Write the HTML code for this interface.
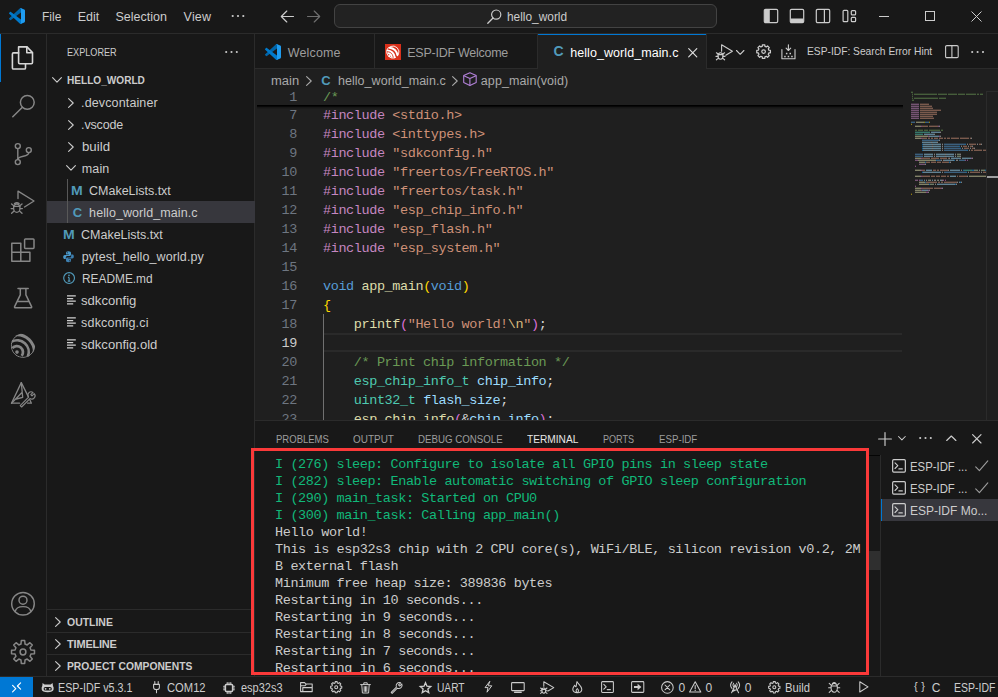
<!DOCTYPE html>
<html lang="en">
<head>
<meta charset="utf-8">
<title>hello_world - Visual Studio Code</title>
<style>
*{box-sizing:border-box;margin:0;padding:0}
html,body{width:998px;height:697px;overflow:hidden;background:#181818}
body{position:relative;font-family:"Liberation Sans",sans-serif;font-size:13px;color:#cccccc;-webkit-font-smoothing:antialiased}
.abs{position:absolute}
.t{position:absolute;white-space:pre;line-height:1}
svg{position:absolute;overflow:visible}
.ic{fill:none;stroke:#cccccc;stroke-width:1;stroke-linecap:round;stroke-linejoin:round}
.mono{font-family:"Liberation Mono",monospace}
/* ---------- title bar ---------- */
#title{left:0;top:0;width:998px;height:34px;background:#181818;border-bottom:1px solid #2b2b2b}
#title .t{font-size:13px;top:10px;color:#cccccc}
#search{left:334px;top:4px;width:383px;height:24px;background:#222222;border:1px solid #434343;border-radius:6px}
/* ---------- activity bar ---------- */
#act{left:0;top:34px;width:47px;height:642px;background:#181818;border-right:1px solid #2b2b2b}
/* ---------- side bar ---------- */
#side{left:47px;top:34px;width:208px;height:642px;background:#181818;border-right:1px solid #2b2b2b}
#side .t{font-size:13px}
/* ---------- editor ---------- */
#tabs{left:255px;top:34px;width:743px;height:35px;background:#181818;border-bottom:1px solid #2b2b2b}
#editor{left:255px;top:69px;width:743px;height:351px;background:#1f1f1f;overflow:hidden}
/* ---------- panel ---------- */
#panel{left:255px;top:420px;width:743px;height:256px;background:#181818;border-top:1px solid #2b2b2b;overflow:hidden}
/* ---------- status ---------- */
#status{left:0;top:676px;width:998px;height:21px;background:#181818;border-top:1px solid #2b2b2b}
#status .t{font-size:12px;top:4px}
</style>
</head>
<body>
<div id="title" class="abs">
<svg style="left:9px;top:8px;" width="16" height="16" viewBox="0 0 100 100"><path fill="#0065A9" d="M96.4614 10.7962L75.8569 0.875542C73.4719 -0.272773 70.6217 0.211611 68.75 2.08333L1.29858 63.5832C-0.515693 65.2373 -0.513607 68.0937 1.30308 69.7452L6.81272 74.754C8.29793 76.1042 10.5347 76.2036 12.1338 74.9905L93.3609 13.3699C96.086 11.3026 100 13.2462 100 16.6667V16.4275C100 14.0265 98.6246 11.8378 96.4614 10.7962Z"/><path fill="#007ACC" d="M96.4614 89.2038L75.8569 99.1245C73.4719 100.273 70.6217 99.7884 68.75 97.9167L1.29858 36.4169C-0.515693 34.7627 -0.513607 31.9063 1.30308 30.2548L6.81272 25.246C8.29793 23.8958 10.5347 23.7964 12.1338 25.0095L93.3609 86.6301C96.086 88.6974 100 86.7538 100 83.3334V83.5726C100 85.9735 98.6246 88.1622 96.4614 89.2038Z"/><path fill="#1F9CF0" d="M75.8578 99.1263C73.4721 100.274 70.6219 99.7885 68.75 97.9166C71.0564 100.223 75 98.5895 75 95.3278V4.67213C75 1.41039 71.0564 -0.223106 68.75 2.08329C70.6219 0.211402 73.4721 -0.273666 75.8578 0.873633L96.4587 10.7807C98.6234 11.8217 100 14.0112 100 16.4132V83.5871C100 85.9891 98.6234 88.1786 96.4586 89.2196L75.8578 99.1263Z"/></svg>
<span class="t" style="left:42.10px;top:10.67px;font-size:12.5px;transform:scaleX(0.9582);transform-origin:0 0;">File</span>
<span class="t" style="left:77.70px;top:10.67px;font-size:12.5px;letter-spacing:-0.013px;">Edit</span>
<span class="t" style="left:115.50px;top:10.67px;font-size:12.5px;letter-spacing:0.010px;">Selection</span>
<span class="t" style="left:183.60px;top:10.67px;font-size:12.5px;letter-spacing:0.177px;">View</span>
<svg style="left:231px;top:14px;" width="14" height="4" viewBox="0 0 14 4"><circle cx="1.7" cy="2" r="1.1" fill="#ccc"/><circle cx="7" cy="2" r="1.1" fill="#ccc"/><circle cx="12.3" cy="2" r="1.1" fill="#ccc"/></svg>
<svg style="left:280px;top:10px;" width="14" height="13" viewBox="0 0 14 13"><path class="ic" d="M13.5 6.5 H1.5 M6.8 1 L1.3 6.5 L6.8 12" style="stroke:#cccccc;stroke-width:1.15"/></svg>
<svg style="left:307px;top:10px;" width="14" height="13" viewBox="0 0 14 13"><path class="ic" d="M0.5 6.5 H12.5 M7.2 1 L12.7 6.5 L7.2 12" style="stroke:#6f6f6f;stroke-width:1.15"/></svg>
<div id="search" class="abs"></div>
<svg style="left:487px;top:9px;" width="15" height="15" viewBox="0 0 15 15"><circle class="ic" cx="9.2" cy="5.6" r="4.6" style="stroke-width:1.2"/><path class="ic" d="M6 9 L0.8 14.2" style="stroke-width:1.3"/></svg>
<span class="t" style="left:506.60px;top:11.07px;font-size:12.5px;transform:scaleX(0.9504);transform-origin:0 0;">hello_world</span>
<svg style="left:763px;top:8px;" width="16" height="16" viewBox="0 0 16 16"><rect x="1.3" y="1.4" width="13.4" height="13.2" rx="1.3" fill="none" stroke="#cccccc" stroke-width="1.2"/><path d="M1.6 2.4 Q1.6 1.7 2.4 1.7 H6.8 V14.3 H2.4 Q1.6 14.3 1.6 13.6 Z" fill="#cccccc"/></svg>
<svg style="left:789px;top:8px;" width="16" height="16" viewBox="0 0 16 16"><rect x="1.3" y="1.4" width="13.4" height="13.2" rx="1.3" fill="none" stroke="#cccccc" stroke-width="1.2"/><path d="M1.6 10.4 H14.4 V13.6 Q14.4 14.3 13.6 14.3 H2.4 Q1.6 14.3 1.6 13.6 Z" fill="#cccccc"/></svg>
<svg style="left:815px;top:8px;" width="16" height="16" viewBox="0 0 16 16"><rect x="1.3" y="1.4" width="13.4" height="13.2" rx="1.3" fill="none" stroke="#cccccc" stroke-width="1.2"/><path d="M9.4 1.4 V14.6" fill="none" stroke="#cccccc" stroke-width="1.2"/></svg>
<svg style="left:842px;top:8px;" width="16" height="16" viewBox="0 0 16 16"><rect x="1.1" y="2.4" width="4.7" height="11.2" rx="0.9" fill="none" stroke="#cccccc" stroke-width="1.2"/><rect x="9.3" y="2.6" width="4.3" height="4.3" rx="0.9" fill="none" stroke="#cccccc" stroke-width="1.2"/><rect x="9.3" y="9.4" width="4.3" height="4.3" rx="0.9" fill="none" stroke="#cccccc" stroke-width="1.2"/></svg>
<div class="abs" style="left:879px;top:16px;width:10px;height:1px;background:#cccccc;"></div>
<div class="abs" style="left:925px;top:11px;width:10px;height:10px;border:1px solid #cccccc"></div>
<svg style="left:971px;top:11px;" width="11" height="11" viewBox="0 0 11 11"><path d="M0.5 0.5 L10.5 10.5 M10.5 0.5 L0.5 10.5" stroke="#cccccc" stroke-width="1" fill="none"/></svg>
</div>
<div id="act" class="abs"></div>
<div class="abs" style="left:0px;top:34px;width:1px;height:48px;background:#0078d4;"></div>
<svg style="left:0px;top:0px;" width="48" height="700" viewBox="0 0 48 700"><g fill="none" stroke="#d7d7d7" stroke-width="1.6" stroke-linejoin="round" stroke-linecap="round"><path d="M18.6 46.9 H27 L32.5 52.6 V62.6 Q32.5 63.7 31.4 63.7 H19.7 Q18.6 63.7 18.6 62.6 Z"/><path d="M26.8 47.1 V52.8 H32.3"/><path d="M18.6 52.9 H13.5 Q12.4 52.9 12.4 54 V67.9 Q12.4 69 13.5 69 H24.4 Q25.5 69 25.5 67.9 V64"/></g></svg>
<svg style="left:0px;top:0px;" width="48" height="700" viewBox="0 0 48 700"><g fill="none" stroke="#868686" stroke-width="1.5" stroke-linejoin="round" stroke-linecap="round"><circle cx="27.3" cy="102.3" r="6.9"/><path d="M22.4 107.3 L12.8 116.8"/></g></svg>
<svg style="left:0px;top:0px;" width="48" height="700" viewBox="0 0 48 700"><g fill="none" stroke="#868686" stroke-width="1.4" stroke-linejoin="round" stroke-linecap="round"><circle cx="17.8" cy="146.1" r="2.5"/><circle cx="17.8" cy="162.1" r="2.5"/><circle cx="28.8" cy="150.1" r="2.5"/><path d="M17.8 148.8 V159.4"/><path d="M28.8 152.8 C28.8 157.5 18.2 155 17.9 159.4"/></g></svg>
<svg style="left:0px;top:0px;" width="48" height="700" viewBox="0 0 48 700"><g fill="none" stroke="#868686" stroke-width="1.35" stroke-linejoin="round" stroke-linecap="round"><path d="M18 198.5 V191.2 L34 201 L24.5 207"/><ellipse cx="16.8" cy="208.2" rx="3.2" ry="4.2"/><path d="M13.6 206.4 H20 M11.2 208.6 H13.4 M20.2 208.6 H22.4 M11.6 204 L13.8 205.8 M22 204 L19.8 205.8 M11.6 213.2 L13.8 211.2 M22 213.2 L19.8 211.2 M14.5 203.6 Q16.8 201.8 19.1 203.6"/></g></svg>
<svg style="left:0px;top:0px;" width="48" height="700" viewBox="0 0 48 700"><g fill="none" stroke="#868686" stroke-width="1.5" stroke-linejoin="round" stroke-linecap="round"><path d="M11.8 243.3 H20.8 V252.2 H29.9 V261.2 H11.8 Z M11.8 252.2 H20.8 V261.2"/><rect x="24.6" y="239" width="9.4" height="9.4" rx="0.8"/></g></svg>
<svg style="left:0px;top:0px;" width="48" height="700" viewBox="0 0 48 700"><g fill="none" stroke="#868686" stroke-width="1.5" stroke-linejoin="round" stroke-linecap="round"><path d="M18 288.4 H28.2 M20.3 288.6 V294.8 L14.6 306.6 Q14.2 307.8 15.6 307.8 H30.6 Q32 307.8 31.6 306.6 L25.9 294.8 V288.6 M17.2 301.6 H29"/></g></svg>
<svg style="left:0px;top:0px;" width="48" height="700" viewBox="0 0 48 700"><defs><clipPath id="espclip"><circle cx="22.9" cy="345.8" r="12.2"/></clipPath></defs><g fill="none" stroke="#868686" clip-path="url(#espclip)" stroke-linecap="butt"><path d="M17.5 335.4 A11.7 11.7 0 1 0 33.6 350.6" stroke-width="1"/><path d="M12.33 348.08 A6.1 6.1 0 0 1 21.67 355.92" stroke-width="2.7"/><path d="M11.51 341.67 A11.7 11.7 0 0 1 27.85 356.38" stroke-width="2.7"/><path d="M14.89 334.83 A17.3 17.3 0 0 1 34.21 353.81" stroke-width="2.9"/></g><circle cx="17" cy="352.1" r="1.8" fill="#868686"/></svg>
<svg style="left:0px;top:0px;" width="48" height="700" viewBox="0 0 48 700"><g fill="none" stroke="#868686" stroke-width="1.3" stroke-linejoin="round" stroke-linecap="round"><path d="M21.3 382.6 L11.5 403.2 H19.6 M21.3 382.6 L28.2 396.4 M27.6 403.2 H31.4 L29.8 399.8"/><path d="M21.3 382.6 L22.7 397.4 L16.4 399 M11.5 403.2 L22.2 392.2"/><path d="M20.2 405.6 L28.6 397.2 A3.3 3.3 0 0 1 33 392.4 L30.8 394.6 L32 395.8 L34.2 393.6 A3.3 3.3 0 0 1 30 398.6 L21.6 407 Z" stroke-width="1.15"/></g></svg>
<svg style="left:0px;top:0px;" width="48" height="700" viewBox="0 0 48 700"><g fill="none" stroke="#868686" stroke-width="1.45" stroke-linejoin="round" stroke-linecap="round"><circle cx="23" cy="603.7" r="11.3"/><circle cx="23" cy="600.2" r="4"/><path d="M15.2 611.6 Q16 606.6 23 606.6 Q30 606.6 30.8 611.6"/></g></svg>
<svg style="left:0px;top:0px;" width="48" height="700" viewBox="0 0 48 700"><g fill="none" stroke="#868686" stroke-width="1.5" stroke-linejoin="round" stroke-linecap="round"><path d="M20.96 644.06 L21.32 640.52 L24.68 640.52 L25.04 644.06 L27.17 644.94 L29.93 642.70 L32.30 645.07 L30.06 647.83 L30.94 649.96 L34.48 650.32 L34.48 653.68 L30.94 654.04 L30.06 656.17 L32.30 658.93 L29.93 661.30 L27.17 659.06 L25.04 659.94 L24.68 663.48 L21.32 663.48 L20.96 659.94 L18.83 659.06 L16.07 661.30 L13.70 658.93 L15.94 656.17 L15.06 654.04 L11.52 653.68 L11.52 650.32 L15.06 649.96 L15.94 647.83 L13.70 645.07 L16.07 642.70 L18.83 644.94 Z"/><circle cx="23" cy="652" r="2.9"/></g></svg>
<div id="side" class="abs"></div>
<span class="t" id="explorer" style="left:67.20px;top:47.24px;font-size:11px;transform:scaleX(0.8296);transform-origin:0 0;">EXPLORER</span>
<svg style="left:224.8px;top:50px;" width="14" height="4" viewBox="0 0 14 4"><circle cx="1.2" cy="2" r="1.05" fill="#cccccc"/><circle cx="6.5" cy="2" r="1.05" fill="#cccccc"/><circle cx="11.799999999999999" cy="2" r="1.05" fill="#cccccc"/></svg>
<svg style="left:52.2px;top:77.3px;" width="10" height="6" viewBox="0 0 10 6"><path d="M0.6 0.6 L5 5.2 L9.4 0.6" fill="none" stroke="#cccccc" stroke-width="1.1" stroke-linecap="round" stroke-linejoin="round"/></svg>
<span class="t" style="left:67.20px;top:75.04px;font-size:11px;transform:scaleX(0.9171);transform-origin:0 0;font-weight:700;">HELLO_WORLD</span>
<div class="abs" style="left:47px;top:201px;width:208px;height:22px;background:#37373d;"></div>
<div class="abs" style="left:67px;top:179px;width:1px;height:44px;background:#585858;"></div>
<span class="t" style="left:81.10px;top:96.67px;font-size:12.5px;letter-spacing:0.129px;">.devcontainer</span>
<svg style="left:67.6px;top:97.8px;" width="6" height="10" viewBox="0 0 6 10"><path d="M0.6 0.6 L5.2 5 L0.6 9.4" fill="none" stroke="#cccccc" stroke-width="1.1" stroke-linecap="round" stroke-linejoin="round"/></svg>
<span class="t" style="left:81.10px;top:118.67px;font-size:12.5px;letter-spacing:-0.163px;">.vscode</span>
<svg style="left:67.6px;top:119.8px;" width="6" height="10" viewBox="0 0 6 10"><path d="M0.6 0.6 L5.2 5 L0.6 9.4" fill="none" stroke="#cccccc" stroke-width="1.1" stroke-linecap="round" stroke-linejoin="round"/></svg>
<span class="t" style="left:81.70px;top:140.67px;font-size:12.5px;transform:scaleX(1.0602);transform-origin:0 0;">build</span>
<svg style="left:67.6px;top:141.79999999999998px;" width="6" height="10" viewBox="0 0 6 10"><path d="M0.6 0.6 L5.2 5 L0.6 9.4" fill="none" stroke="#cccccc" stroke-width="1.1" stroke-linecap="round" stroke-linejoin="round"/></svg>
<span class="t" style="left:81.70px;top:162.67px;font-size:12.5px;letter-spacing:0.168px;">main</span>
<svg style="left:65.5px;top:165.0px;" width="10" height="6" viewBox="0 0 10 6"><path d="M0.6 0.6 L5 5.2 L9.4 0.6" fill="none" stroke="#cccccc" stroke-width="1.1" stroke-linecap="round" stroke-linejoin="round"/></svg>
<span class="t" style="left:89.10px;top:184.67px;font-size:12.5px;letter-spacing:-0.020px;">CMakeLists.txt</span>
<span class="t" style="left:70.80px;top:184.44px;font-size:13px;transform:scaleX(1.1081);transform-origin:0 0;color:#519aba;font-weight:700;transform:scaleX(1.08);transform-origin:0 0;">M</span>
<span class="t" style="left:89.10px;top:206.67px;font-size:12.5px;letter-spacing:0.082px;">hello_world_main.c</span>
<span class="t" style="left:72.70px;top:206.44px;font-size:13px;color:#519aba;font-weight:700;">C</span>
<span class="t" style="left:81.10px;top:228.67px;font-size:12.5px;letter-spacing:-0.020px;">CMakeLists.txt</span>
<span class="t" style="left:63.20px;top:228.44px;font-size:13px;transform:scaleX(1.1081);transform-origin:0 0;color:#519aba;font-weight:700;transform:scaleX(1.08);transform-origin:0 0;">M</span>
<span class="t" style="left:81.70px;top:250.67px;font-size:12.5px;letter-spacing:0.094px;">pytest_hello_world.py</span>
<svg style="left:63.4px;top:250.50000000000003px;" width="11" height="11.5" viewBox="0 0 11 11.5"><path d="M5.4 0.3 C3.4 0.3 3 1 3 2 V3.4 H5.8 V4 H1.8 C0.6 4 0.2 5 0.2 6 C0.2 7.4 0.8 8 1.8 8 H2.8 V6.6 C2.8 5.6 3.6 5 4.4 5 H6.8 C7.6 5 8 4.4 8 3.6 V2 C8 1 7.4 0.3 5.4 0.3 Z" fill="#4a98c9"/><path d="M5.6 11.2 C7.6 11.2 8 10.5 8 9.5 V8.1 H5.2 V7.5 H9.2 C10.4 7.5 10.8 6.5 10.8 5.5 C10.8 4.1 10.2 3.5 9.2 3.5 H8.2 V4.9 C8.2 5.9 7.4 6.5 6.6 6.5 H4.2 C3.4 6.5 3 7.1 3 7.9 V9.5 C3 10.5 3.6 11.2 5.6 11.2 Z" fill="#3d7fb0"/><circle cx="4.3" cy="1.8" r="0.55" fill="#181818"/><circle cx="6.7" cy="9.7" r="0.55" fill="#181818"/></svg>
<span class="t" style="left:81.70px;top:272.67px;font-size:12.5px;transform:scaleX(0.9500);transform-origin:0 0;">README.md</span>
<svg style="left:62.8px;top:272.40000000000003px;" width="12.2" height="12.2" viewBox="0 0 12.2 12.2"><circle cx="6.1" cy="6.1" r="5.4" fill="none" stroke="#519aba" stroke-width="1.15"/><path d="M6.1 5.4 V9 M4.9 5.4 H6.1 M4.8 9.1 H7.4" stroke="#519aba" stroke-width="1.2" fill="none"/><circle cx="6" cy="3.3" r="0.85" fill="#519aba"/></svg>
<span class="t" style="left:81.10px;top:294.67px;font-size:12.5px;transform:scaleX(1.0491);transform-origin:0 0;">sdkconfig</span>
<svg style="left:66.6px;top:294.8px;" width="9" height="10" viewBox="0 0 9 10"><path d="M0 0.8 H8.8 M0 3.5 H6.2 M0 6.2 H8.8 M0 8.9 H6.2" stroke="#d0d0d0" stroke-width="1.25" fill="none"/></svg>
<span class="t" style="left:81.10px;top:316.67px;font-size:12.5px;letter-spacing:0.190px;">sdkconfig.ci</span>
<svg style="left:66.6px;top:316.8px;" width="9" height="10" viewBox="0 0 9 10"><path d="M0 0.8 H8.8 M0 3.5 H6.2 M0 6.2 H8.8 M0 8.9 H6.2" stroke="#d0d0d0" stroke-width="1.25" fill="none"/></svg>
<span class="t" style="left:81.10px;top:338.67px;font-size:12.5px;transform:scaleX(1.0471);transform-origin:0 0;">sdkconfig.old</span>
<svg style="left:66.6px;top:338.8px;" width="9" height="10" viewBox="0 0 9 10"><path d="M0 0.8 H8.8 M0 3.5 H6.2 M0 6.2 H8.8 M0 8.9 H6.2" stroke="#d0d0d0" stroke-width="1.25" fill="none"/></svg>
<div class="abs" style="left:47px;top:609px;width:207px;height:1px;background:#2b2b2b;"></div>
<div class="abs" style="left:47px;top:632px;width:207px;height:1px;background:#2b2b2b;"></div>
<div class="abs" style="left:47px;top:654px;width:207px;height:1px;background:#2b2b2b;"></div>
<span class="t" style="left:67.10px;top:617.24px;font-size:11px;transform:scaleX(0.9508);transform-origin:0 0;font-weight:700;">OUTLINE</span>
<svg style="left:54.8px;top:617.3px;" width="6" height="10" viewBox="0 0 6 10"><path d="M0.6 0.6 L5.2 5 L0.6 9.4" fill="none" stroke="#cccccc" stroke-width="1.1" stroke-linecap="round" stroke-linejoin="round"/></svg>
<span class="t" style="left:67.10px;top:639.34px;font-size:11px;letter-spacing:-0.219px;font-weight:700;">TIMELINE</span>
<svg style="left:54.8px;top:639.4px;" width="6" height="10" viewBox="0 0 6 10"><path d="M0.6 0.6 L5.2 5 L0.6 9.4" fill="none" stroke="#cccccc" stroke-width="1.1" stroke-linecap="round" stroke-linejoin="round"/></svg>
<span class="t" style="left:67.10px;top:661.34px;font-size:11px;transform:scaleX(0.9361);transform-origin:0 0;font-weight:700;">PROJECT COMPONENTS</span>
<svg style="left:54.8px;top:661.4px;" width="6" height="10" viewBox="0 0 6 10"><path d="M0.6 0.6 L5.2 5 L0.6 9.4" fill="none" stroke="#cccccc" stroke-width="1.1" stroke-linecap="round" stroke-linejoin="round"/></svg>
<div id="tabs" class="abs"></div>
<div class="abs" style="left:374px;top:34px;width:1px;height:34px;background:#2b2b2b;"></div>
<div class="abs" style="left:537px;top:34px;width:1px;height:34px;background:#2b2b2b;"></div>
<div class="abs" style="left:538px;top:34px;width:168px;height:35px;background:#1f1f1f;"></div>
<div class="abs" style="left:538px;top:34px;width:168px;height:1px;background:#0078d4;"></div>
<div class="abs" style="left:706px;top:34px;width:1px;height:35px;background:#2b2b2b;"></div>
<svg style="left:265px;top:44px;" width="16" height="16" viewBox="0 0 100 100"><path fill="#0065A9" d="M96.4614 10.7962L75.8569 0.875542C73.4719 -0.272773 70.6217 0.211611 68.75 2.08333L1.29858 63.5832C-0.515693 65.2373 -0.513607 68.0937 1.30308 69.7452L6.81272 74.754C8.29793 76.1042 10.5347 76.2036 12.1338 74.9905L93.3609 13.3699C96.086 11.3026 100 13.2462 100 16.6667V16.4275C100 14.0265 98.6246 11.8378 96.4614 10.7962Z"/><path fill="#007ACC" d="M96.4614 89.2038L75.8569 99.1245C73.4719 100.273 70.6217 99.7884 68.75 97.9167L1.29858 36.4169C-0.515693 34.7627 -0.513607 31.9063 1.30308 30.2548L6.81272 25.246C8.29793 23.8958 10.5347 23.7964 12.1338 25.0095L93.3609 86.6301C96.086 88.6974 100 86.7538 100 83.3334V83.5726C100 85.9735 98.6246 88.1622 96.4614 89.2038Z"/><path fill="#1F9CF0" d="M75.8578 99.1263C73.4721 100.274 70.6219 99.7885 68.75 97.9166C71.0564 100.223 75 98.5895 75 95.3278V4.67213C75 1.41039 71.0564 -0.223106 68.75 2.08329C70.6219 0.211402 73.4721 -0.273666 75.8578 0.873633L96.4587 10.7807C98.6234 11.8217 100 14.0112 100 16.4132V83.5871C100 85.9891 98.6234 88.1786 96.4586 89.2196L75.8578 99.1263Z"/></svg>
<span class="t" style="left:287.80px;top:47.07px;font-size:12.5px;letter-spacing:0.138px;color:#9d9d9d;">Welcome</span>
<svg style="left:385px;top:44px;" width="16" height="16" viewBox="0 0 16 16"><rect x="0" y="0" width="16" height="16" fill="#d9301b"/><g fill="none" stroke="#ffffff" stroke-linecap="round"><path d="M3.4 3.6 A6.2 6.2 0 0 0 10.6 13.4" stroke-width="0.9"/><path d="M5.6 2.4 A6.2 6.2 0 0 1 13.6 10.4" stroke-width="0.9"/><path d="M2.6 6.4 A7.4 7.4 0 0 1 9.6 13.2" stroke-width="1.9"/><path d="M3.2 9.2 A4.4 4.4 0 0 1 6.8 12.8" stroke-width="1.8"/><path d="M4.6 3.8 A9 9 0 0 1 12.4 11.2" stroke-width="1.9"/></g><circle cx="4.3" cy="12.1" r="1.1" fill="#fff"/></svg>
<span class="t" style="left:407.30px;top:47.07px;font-size:12.5px;letter-spacing:-0.261px;color:#9d9d9d;">ESP-IDF Welcome</span>
<span class="t" style="left:553.40px;top:44.30px;font-size:14px;color:#519aba;font-weight:700;">C</span>
<span class="t" style="left:570.20px;top:47.07px;font-size:12.5px;letter-spacing:0.070px;color:#ffffff;">hello_world_main.c</span>
<svg style="left:688px;top:48px;" width="10" height="10" viewBox="0 0 10 10"><path d="M0.7 0.7 L8.8 8.8 M8.8 0.7 L0.7 8.8" stroke="#e0e0e0" stroke-width="1.15" fill="none" stroke-linecap="round"/></svg>
<svg style="left:715px;top:44px;" width="19" height="17" viewBox="0 0 19 17"><g fill="none" stroke="#cccccc" stroke-width="1.1" stroke-linejoin="round" stroke-linecap="round"><path d="M6.6 7.2 V0.7 L17.4 7.2 L10.8 11.2"/><ellipse cx="5.5" cy="12" rx="2.5" ry="3.3"/><path d="M3 10.6 H8 M1 12.4 H3 M8 12.4 H10 M1.4 8.8 L3.2 10 M9.6 8.8 L7.8 10 M1.4 15.8 L3.2 14.4 M9.6 15.8 L7.8 14.4"/></g></svg>
<svg style="left:735.8px;top:49.6px;" width="9" height="5.4" viewBox="0 0 9 5.4"><path d="M0.5 0.5 L4.2 4.3 L7.9 0.5" fill="none" stroke="#cccccc" stroke-width="1.1" stroke-linecap="round" stroke-linejoin="round"/></svg>
<svg style="left:756px;top:44.4px;" width="15.2" height="15.2" viewBox="0 0 16 16"><path d="M6.58 2.48 L6.72 0.81 L9.28 0.81 L9.42 2.48 L10.90 3.09 L12.18 2.01 L13.99 3.82 L12.91 5.10 L13.52 6.58 L15.19 6.72 L15.19 9.28 L13.52 9.42 L12.91 10.90 L13.99 12.18 L12.18 13.99 L10.90 12.91 L9.42 13.52 L9.28 15.19 L6.72 15.19 L6.58 13.52 L5.10 12.91 L3.82 13.99 L2.01 12.18 L3.09 10.90 L2.48 9.42 L0.81 9.28 L0.81 6.72 L2.48 6.58 L3.09 5.10 L2.01 3.82 L3.82 2.01 L5.10 3.09 Z" fill="none" stroke="#cccccc" stroke-width="1.3" stroke-linejoin="round"/><circle cx="8" cy="8" r="1.9" fill="none" stroke="#cccccc" stroke-width="1.3"/></svg>
<svg style="left:781px;top:43.5px;" width="15" height="16" viewBox="0 0 15 16"><g fill="none" stroke="#cccccc" stroke-width="1.1" stroke-linecap="round" stroke-linejoin="round"><path d="M7.4 0.7 V6.4 M5.1 4.2 L7.4 6.5 L9.7 4.2"/><path d="M0.9 5.6 V14.8 H14 V5.6"/></g><g fill="#cccccc"><rect x="4.9" y="8.8" width="1.5" height="1.5"/><rect x="8.5" y="8.8" width="1.5" height="1.5"/><rect x="3.2" y="11.8" width="1.5" height="1.5"/><rect x="6.7" y="11.8" width="1.5" height="1.5"/><rect x="10.2" y="11.8" width="1.5" height="1.5"/></g></svg>
<span class="t" style="left:807.40px;top:45.91px;font-size:11.5px;transform:scaleX(0.8905);transform-origin:0 0;">ESP-IDF: Search Error Hint</span>
<svg style="left:944.6px;top:45px;" width="14" height="13.4" viewBox="0 0 14 13.4"><rect x="0.6" y="0.6" width="12.6" height="12" rx="1.2" fill="none" stroke="#cccccc" stroke-width="1.1"/><path d="M6.9 0.6 V12.6" stroke="#cccccc" stroke-width="1.1"/></svg>
<svg style="left:970.6px;top:50.2px;" width="14" height="4" viewBox="0 0 14 4"><circle cx="1.2" cy="2" r="1.05" fill="#cccccc"/><circle cx="6.6000000000000005" cy="2" r="1.05" fill="#cccccc"/><circle cx="12.0" cy="2" r="1.05" fill="#cccccc"/></svg>
<div id="editor" class="abs"></div>
<span class="t" style="left:271.00px;top:74.67px;font-size:12.5px;transform:scaleX(1.0371);transform-origin:0 0;color:#a9a9a9;">main</span>
<svg style="left:305.6px;top:76.2px;" width="6" height="10" viewBox="0 0 6 10"><path d="M0.6 0.6 L5.2 5 L0.6 9.4" fill="none" stroke="#a9a9a9" stroke-width="1.1" stroke-linecap="round" stroke-linejoin="round"/></svg>
<span class="t" style="left:321.20px;top:74.04px;font-size:13px;color:#519aba;font-weight:700;">C</span>
<span class="t" style="left:338.00px;top:74.67px;font-size:12.5px;letter-spacing:0.041px;color:#a9a9a9;">hello_world_main.c</span>
<svg style="left:452px;top:76.2px;" width="6" height="10" viewBox="0 0 6 10"><path d="M0.6 0.6 L5.2 5 L0.6 9.4" fill="none" stroke="#a9a9a9" stroke-width="1.1" stroke-linecap="round" stroke-linejoin="round"/></svg>
<svg style="left:463px;top:72.4px;" width="14" height="14.4" viewBox="0 0 14 14.4"><g fill="none" stroke="#b180d7" stroke-width="1.1" stroke-linejoin="round"><path d="M6.9 0.7 L13.2 3.6 V10.6 L6.9 13.6 L0.7 10.6 V3.6 Z"/><path d="M0.9 3.7 L6.9 6.6 L13 3.7 M6.9 6.6 V13.4"/></g></svg>
<span class="t" style="left:480.80px;top:74.67px;font-size:12.5px;letter-spacing:0.095px;color:#a9a9a9;">app_main(void)</span>
<div class="abs" style="left:255px;top:91px;width:743px;height:329px;overflow:hidden"><div class="abs" style="left:-255px;top:-91px;width:998px;height:697px">
<div class="abs" style="left:324px;top:333px;width:578px;height:2px;background:#2a2a2a;"></div>
<div class="abs" style="left:324px;top:350px;width:578px;height:2px;background:#2a2a2a;"></div>
<span class="t mono" style="left:289.20px;top:108.66px;font-size:13.5px;letter-spacing:-0.402px;color:#6e7681">7</span><span class="t mono" style="left:323px;top:108.66px;font-size:13.5px;letter-spacing:-0.402px"><span style="color:#c586c0">#include</span><span style="color:#d4d4d4"> </span><span style="color:#ce9178">&lt;stdio.h&gt;</span></span>
<span class="t mono" style="left:289.20px;top:127.66px;font-size:13.5px;letter-spacing:-0.402px;color:#6e7681">8</span><span class="t mono" style="left:323px;top:127.66px;font-size:13.5px;letter-spacing:-0.402px"><span style="color:#c586c0">#include</span><span style="color:#d4d4d4"> </span><span style="color:#ce9178">&lt;inttypes.h&gt;</span></span>
<span class="t mono" style="left:289.20px;top:146.66px;font-size:13.5px;letter-spacing:-0.402px;color:#6e7681">9</span><span class="t mono" style="left:323px;top:146.66px;font-size:13.5px;letter-spacing:-0.402px"><span style="color:#c586c0">#include</span><span style="color:#d4d4d4"> </span><span style="color:#ce9178">&quot;sdkconfig.h&quot;</span></span>
<span class="t mono" style="left:281.50px;top:165.66px;font-size:13.5px;letter-spacing:-0.402px;color:#6e7681">10</span><span class="t mono" style="left:323px;top:165.66px;font-size:13.5px;letter-spacing:-0.402px"><span style="color:#c586c0">#include</span><span style="color:#d4d4d4"> </span><span style="color:#ce9178">&quot;freertos/FreeRTOS.h&quot;</span></span>
<span class="t mono" style="left:281.50px;top:184.66px;font-size:13.5px;letter-spacing:-0.402px;color:#6e7681">11</span><span class="t mono" style="left:323px;top:184.66px;font-size:13.5px;letter-spacing:-0.402px"><span style="color:#c586c0">#include</span><span style="color:#d4d4d4"> </span><span style="color:#ce9178">&quot;freertos/task.h&quot;</span></span>
<span class="t mono" style="left:281.50px;top:203.66px;font-size:13.5px;letter-spacing:-0.402px;color:#6e7681">12</span><span class="t mono" style="left:323px;top:203.66px;font-size:13.5px;letter-spacing:-0.402px"><span style="color:#c586c0">#include</span><span style="color:#d4d4d4"> </span><span style="color:#ce9178">&quot;esp_chip_info.h&quot;</span></span>
<span class="t mono" style="left:281.50px;top:222.66px;font-size:13.5px;letter-spacing:-0.402px;color:#6e7681">13</span><span class="t mono" style="left:323px;top:222.66px;font-size:13.5px;letter-spacing:-0.402px"><span style="color:#c586c0">#include</span><span style="color:#d4d4d4"> </span><span style="color:#ce9178">&quot;esp_flash.h&quot;</span></span>
<span class="t mono" style="left:281.50px;top:241.66px;font-size:13.5px;letter-spacing:-0.402px;color:#6e7681">14</span><span class="t mono" style="left:323px;top:241.66px;font-size:13.5px;letter-spacing:-0.402px"><span style="color:#c586c0">#include</span><span style="color:#d4d4d4"> </span><span style="color:#ce9178">&quot;esp_system.h&quot;</span></span>
<span class="t mono" style="left:281.50px;top:260.66px;font-size:13.5px;letter-spacing:-0.402px;color:#6e7681">15</span>
<span class="t mono" style="left:281.50px;top:279.66px;font-size:13.5px;letter-spacing:-0.402px;color:#6e7681">16</span><span class="t mono" style="left:323px;top:279.66px;font-size:13.5px;letter-spacing:-0.402px"><span style="color:#569cd6">void</span><span style="color:#d4d4d4"> </span><span style="color:#dcdcaa">app_main</span><span style="color:#ffd700">(</span><span style="color:#569cd6">void</span><span style="color:#ffd700">)</span></span>
<span class="t mono" style="left:281.50px;top:298.66px;font-size:13.5px;letter-spacing:-0.402px;color:#6e7681">17</span><span class="t mono" style="left:323px;top:298.66px;font-size:13.5px;letter-spacing:-0.402px"><span style="color:#ffd700">{</span></span>
<span class="t mono" style="left:281.50px;top:317.66px;font-size:13.5px;letter-spacing:-0.402px;color:#6e7681">18</span><span class="t mono" style="left:323px;top:317.66px;font-size:13.5px;letter-spacing:-0.402px"><span style="color:#d4d4d4">    </span><span style="color:#dcdcaa">printf</span><span style="color:#da70d6">(</span><span style="color:#ce9178">&quot;Hello world!</span><span style="color:#d7ba7d">\n</span><span style="color:#ce9178">&quot;</span><span style="color:#da70d6">)</span><span style="color:#d4d4d4">;</span></span>
<span class="t mono" style="left:281.50px;top:336.66px;font-size:13.5px;letter-spacing:-0.402px;color:#cccccc">19</span>
<span class="t mono" style="left:281.50px;top:355.66px;font-size:13.5px;letter-spacing:-0.402px;color:#6e7681">20</span><span class="t mono" style="left:323px;top:355.66px;font-size:13.5px;letter-spacing:-0.402px"><span style="color:#d4d4d4">    </span><span style="color:#6a9955">/* Print chip information */</span></span>
<span class="t mono" style="left:281.50px;top:374.66px;font-size:13.5px;letter-spacing:-0.402px;color:#6e7681">21</span><span class="t mono" style="left:323px;top:374.66px;font-size:13.5px;letter-spacing:-0.402px"><span style="color:#d4d4d4">    </span><span style="color:#4ec9b0">esp_chip_info_t</span><span style="color:#d4d4d4"> </span><span style="color:#9cdcfe">chip_info</span><span style="color:#d4d4d4">;</span></span>
<span class="t mono" style="left:281.50px;top:393.66px;font-size:13.5px;letter-spacing:-0.402px;color:#6e7681">22</span><span class="t mono" style="left:323px;top:393.66px;font-size:13.5px;letter-spacing:-0.402px"><span style="color:#d4d4d4">    </span><span style="color:#4ec9b0">uint32_t</span><span style="color:#d4d4d4"> </span><span style="color:#9cdcfe">flash_size</span><span style="color:#d4d4d4">;</span></span>
<span class="t mono" style="left:281.50px;top:412.66px;font-size:13.5px;letter-spacing:-0.402px;color:#6e7681">23</span><span class="t mono" style="left:323px;top:412.66px;font-size:13.5px;letter-spacing:-0.402px"><span style="color:#d4d4d4">    </span><span style="color:#dcdcaa">esp_chip_info</span><span style="color:#da70d6">(</span><span style="color:#d4d4d4">&amp;</span><span style="color:#9cdcfe">chip_info</span><span style="color:#da70d6">)</span><span style="color:#d4d4d4">;</span></span>
<div class="abs" style="left:323px;top:314px;width:1px;height:106px;background:#707070;"></div>
<div class="abs" style="left:255px;top:91px;width:648px;height:14px;background:#1f1f1f;"></div>
<span class="t mono" style="left:289.20px;top:90.66px;font-size:13.5px;letter-spacing:-0.402px;color:#6e7681">1</span><span class="t mono" style="left:323px;top:90.66px;font-size:13.5px;letter-spacing:-0.402px"><span style="color:#6a9955">/*</span></span>
<div class="abs" style="left:257px;top:105px;width:646px;height:1px;background:#000000;"></div>
<div class="abs" style="left:257px;top:106px;width:646px;height:1px;background:rgba(0,0,0,.72);"></div>
<div class="abs" style="left:257px;top:107px;width:646px;height:1px;background:rgba(0,0,0,.28);"></div>
<div class="abs" style="left:257px;top:108px;width:646px;height:1px;background:rgba(0,0,0,.1);"></div>
</div></div>
<svg style="left:0px;top:0px;" width="998" height="200" viewBox="0 0 998 200"><g opacity="0.52"><rect x="911" y="92" width="2" height="1" fill="#6a9955"/><rect x="912" y="94" width="1" height="1" fill="#6a9955"/><rect x="914" y="94" width="23" height="1" fill="#6a9955"/><rect x="938" y="94" width="9" height="1" fill="#6a9955"/><rect x="948" y="94" width="9" height="1" fill="#6a9955"/><rect x="958" y="94" width="7" height="1" fill="#6a9955"/><rect x="966" y="94" width="10" height="1" fill="#6a9955"/><rect x="977" y="94" width="2" height="1" fill="#6a9955"/><rect x="980" y="94" width="3" height="1" fill="#6a9955"/><rect x="912" y="96" width="1" height="1" fill="#6a9955"/><rect x="912" y="98" width="1" height="1" fill="#6a9955"/><rect x="914" y="98" width="24" height="1" fill="#6a9955"/><rect x="939" y="98" width="7" height="1" fill="#6a9955"/><rect x="912" y="100" width="2" height="1" fill="#6a9955"/><rect x="911" y="104" width="8" height="1" fill="#c586c0"/><rect x="920" y="104" width="9" height="1" fill="#ce9178"/><rect x="911" y="106" width="8" height="1" fill="#c586c0"/><rect x="920" y="106" width="12" height="1" fill="#ce9178"/><rect x="911" y="108" width="8" height="1" fill="#c586c0"/><rect x="920" y="108" width="13" height="1" fill="#ce9178"/><rect x="911" y="110" width="8" height="1" fill="#c586c0"/><rect x="920" y="110" width="21" height="1" fill="#ce9178"/><rect x="911" y="112" width="8" height="1" fill="#c586c0"/><rect x="920" y="112" width="17" height="1" fill="#ce9178"/><rect x="911" y="114" width="8" height="1" fill="#c586c0"/><rect x="920" y="114" width="17" height="1" fill="#ce9178"/><rect x="911" y="116" width="8" height="1" fill="#c586c0"/><rect x="920" y="116" width="13" height="1" fill="#ce9178"/><rect x="911" y="118" width="8" height="1" fill="#c586c0"/><rect x="920" y="118" width="14" height="1" fill="#ce9178"/><rect x="911" y="122" width="4" height="1" fill="#569cd6"/><rect x="916" y="122" width="8" height="1" fill="#dcdcaa"/><rect x="924" y="122" width="1" height="1" fill="#ffd700"/><rect x="925" y="122" width="4" height="1" fill="#569cd6"/><rect x="929" y="122" width="1" height="1" fill="#ffd700"/><rect x="911" y="124" width="1" height="1" fill="#ffd700"/><rect x="915" y="126" width="6" height="1" fill="#dcdcaa"/><rect x="921" y="126" width="1" height="1" fill="#da70d6"/><rect x="922" y="126" width="6" height="1" fill="#ce9178"/><rect x="929" y="126" width="9" height="1" fill="#ce9178"/><rect x="938" y="126" width="1" height="1" fill="#da70d6"/><rect x="939" y="126" width="1" height="1" fill="#d4d4d4"/><rect x="915" y="130" width="2" height="1" fill="#6a9955"/><rect x="918" y="130" width="5" height="1" fill="#6a9955"/><rect x="924" y="130" width="4" height="1" fill="#6a9955"/><rect x="929" y="130" width="11" height="1" fill="#6a9955"/><rect x="941" y="130" width="2" height="1" fill="#6a9955"/><rect x="915" y="132" width="15" height="1" fill="#4ec9b0"/><rect x="931" y="132" width="9" height="1" fill="#9cdcfe"/><rect x="940" y="132" width="1" height="1" fill="#d4d4d4"/><rect x="915" y="134" width="8" height="1" fill="#4ec9b0"/><rect x="924" y="134" width="10" height="1" fill="#9cdcfe"/><rect x="934" y="134" width="1" height="1" fill="#d4d4d4"/><rect x="915" y="136" width="13" height="1" fill="#dcdcaa"/><rect x="928" y="136" width="1" height="1" fill="#da70d6"/><rect x="929" y="136" width="1" height="1" fill="#d4d4d4"/><rect x="930" y="136" width="9" height="1" fill="#9cdcfe"/><rect x="939" y="136" width="1" height="1" fill="#da70d6"/><rect x="940" y="136" width="1" height="1" fill="#d4d4d4"/><rect x="915" y="138" width="6" height="1" fill="#dcdcaa"/><rect x="921" y="138" width="1" height="1" fill="#da70d6"/><rect x="922" y="138" width="5" height="1" fill="#ce9178"/><rect x="928" y="138" width="2" height="1" fill="#ce9178"/><rect x="931" y="138" width="2" height="1" fill="#ce9178"/><rect x="934" y="138" width="4" height="1" fill="#ce9178"/><rect x="939" y="138" width="4" height="1" fill="#ce9178"/><rect x="944" y="138" width="2" height="1" fill="#ce9178"/><rect x="947" y="138" width="3" height="1" fill="#ce9178"/><rect x="951" y="138" width="8" height="1" fill="#ce9178"/><rect x="960" y="138" width="9" height="1" fill="#ce9178"/><rect x="970" y="138" width="1" height="1" fill="#ce9178"/><rect x="971" y="138" width="1" height="1" fill="#d4d4d4"/><rect x="922" y="140" width="17" height="1" fill="#569cd6"/><rect x="939" y="140" width="1" height="1" fill="#d4d4d4"/><rect x="922" y="142" width="9" height="1" fill="#9cdcfe"/><rect x="931" y="142" width="1" height="1" fill="#d4d4d4"/><rect x="932" y="142" width="5" height="1" fill="#9cdcfe"/><rect x="937" y="142" width="1" height="1" fill="#d4d4d4"/><rect x="922" y="144" width="1" height="1" fill="#179fff"/><rect x="923" y="144" width="9" height="1" fill="#9cdcfe"/><rect x="932" y="144" width="1" height="1" fill="#d4d4d4"/><rect x="933" y="144" width="8" height="1" fill="#9cdcfe"/><rect x="942" y="144" width="1" height="1" fill="#d4d4d4"/><rect x="944" y="144" width="21" height="1" fill="#569cd6"/><rect x="965" y="144" width="1" height="1" fill="#179fff"/><rect x="967" y="144" width="1" height="1" fill="#d4d4d4"/><rect x="969" y="144" width="7" height="1" fill="#ce9178"/><rect x="977" y="144" width="1" height="1" fill="#d4d4d4"/><rect x="979" y="144" width="2" height="1" fill="#ce9178"/><rect x="981" y="144" width="1" height="1" fill="#d4d4d4"/><rect x="922" y="146" width="1" height="1" fill="#179fff"/><rect x="923" y="146" width="9" height="1" fill="#9cdcfe"/><rect x="932" y="146" width="1" height="1" fill="#d4d4d4"/><rect x="933" y="146" width="8" height="1" fill="#9cdcfe"/><rect x="942" y="146" width="1" height="1" fill="#d4d4d4"/><rect x="944" y="146" width="15" height="1" fill="#569cd6"/><rect x="959" y="146" width="1" height="1" fill="#179fff"/><rect x="961" y="146" width="1" height="1" fill="#d4d4d4"/><rect x="963" y="146" width="4" height="1" fill="#ce9178"/><rect x="968" y="146" width="1" height="1" fill="#d4d4d4"/><rect x="970" y="146" width="2" height="1" fill="#ce9178"/><rect x="972" y="146" width="1" height="1" fill="#d4d4d4"/><rect x="922" y="148" width="1" height="1" fill="#179fff"/><rect x="923" y="148" width="9" height="1" fill="#9cdcfe"/><rect x="932" y="148" width="1" height="1" fill="#d4d4d4"/><rect x="933" y="148" width="8" height="1" fill="#9cdcfe"/><rect x="942" y="148" width="1" height="1" fill="#d4d4d4"/><rect x="944" y="148" width="16" height="1" fill="#569cd6"/><rect x="960" y="148" width="1" height="1" fill="#179fff"/><rect x="962" y="148" width="1" height="1" fill="#d4d4d4"/><rect x="964" y="148" width="5" height="1" fill="#ce9178"/><rect x="970" y="148" width="1" height="1" fill="#d4d4d4"/><rect x="972" y="148" width="2" height="1" fill="#ce9178"/><rect x="974" y="148" width="1" height="1" fill="#d4d4d4"/><rect x="922" y="150" width="1" height="1" fill="#179fff"/><rect x="923" y="150" width="9" height="1" fill="#9cdcfe"/><rect x="932" y="150" width="1" height="1" fill="#d4d4d4"/><rect x="933" y="150" width="8" height="1" fill="#9cdcfe"/><rect x="942" y="150" width="1" height="1" fill="#d4d4d4"/><rect x="944" y="150" width="23" height="1" fill="#569cd6"/><rect x="967" y="150" width="1" height="1" fill="#179fff"/><rect x="969" y="150" width="1" height="1" fill="#d4d4d4"/><rect x="971" y="150" width="2" height="1" fill="#ce9178"/><rect x="974" y="150" width="8" height="1" fill="#ce9178"/><rect x="983" y="150" width="3" height="1" fill="#ce9178"/><rect x="915" y="154" width="8" height="1" fill="#569cd6"/><rect x="924" y="154" width="9" height="1" fill="#9cdcfe"/><rect x="934" y="154" width="1" height="1" fill="#d4d4d4"/><rect x="936" y="154" width="9" height="1" fill="#9cdcfe"/><rect x="945" y="154" width="1" height="1" fill="#d4d4d4"/><rect x="946" y="154" width="8" height="1" fill="#9cdcfe"/><rect x="955" y="154" width="1" height="1" fill="#d4d4d4"/><rect x="957" y="154" width="3" height="1" fill="#b5cea8"/><rect x="960" y="154" width="1" height="1" fill="#d4d4d4"/><rect x="915" y="156" width="8" height="1" fill="#569cd6"/><rect x="924" y="156" width="9" height="1" fill="#9cdcfe"/><rect x="934" y="156" width="1" height="1" fill="#d4d4d4"/><rect x="936" y="156" width="9" height="1" fill="#9cdcfe"/><rect x="945" y="156" width="1" height="1" fill="#d4d4d4"/><rect x="946" y="156" width="8" height="1" fill="#9cdcfe"/><rect x="955" y="156" width="1" height="1" fill="#d4d4d4"/><rect x="957" y="156" width="3" height="1" fill="#b5cea8"/><rect x="960" y="156" width="1" height="1" fill="#d4d4d4"/><rect x="915" y="158" width="6" height="1" fill="#dcdcaa"/><rect x="921" y="158" width="1" height="1" fill="#da70d6"/><rect x="922" y="158" width="8" height="1" fill="#ce9178"/><rect x="931" y="158" width="8" height="1" fill="#ce9178"/><rect x="940" y="158" width="7" height="1" fill="#ce9178"/><rect x="948" y="158" width="1" height="1" fill="#ce9178"/><rect x="949" y="158" width="1" height="1" fill="#d4d4d4"/><rect x="951" y="158" width="9" height="1" fill="#9cdcfe"/><rect x="960" y="158" width="1" height="1" fill="#d4d4d4"/><rect x="962" y="158" width="9" height="1" fill="#9cdcfe"/><rect x="971" y="158" width="1" height="1" fill="#da70d6"/><rect x="972" y="158" width="1" height="1" fill="#d4d4d4"/><rect x="915" y="160" width="2" height="1" fill="#c586c0"/><rect x="917" y="160" width="1" height="1" fill="#da70d6"/><rect x="918" y="160" width="18" height="1" fill="#dcdcaa"/><rect x="936" y="160" width="1" height="1" fill="#179fff"/><rect x="937" y="160" width="4" height="1" fill="#569cd6"/><rect x="941" y="160" width="1" height="1" fill="#d4d4d4"/><rect x="943" y="160" width="1" height="1" fill="#d4d4d4"/><rect x="944" y="160" width="10" height="1" fill="#9cdcfe"/><rect x="954" y="160" width="1" height="1" fill="#179fff"/><rect x="956" y="160" width="1" height="1" fill="#d4d4d4"/><rect x="957" y="160" width="1" height="1" fill="#d4d4d4"/><rect x="959" y="160" width="6" height="1" fill="#569cd6"/><rect x="965" y="160" width="1" height="1" fill="#da70d6"/><rect x="967" y="160" width="1" height="1" fill="#da70d6"/><rect x="919" y="162" width="6" height="1" fill="#dcdcaa"/><rect x="925" y="162" width="1" height="1" fill="#179fff"/><rect x="926" y="162" width="4" height="1" fill="#ce9178"/><rect x="931" y="162" width="5" height="1" fill="#ce9178"/><rect x="937" y="162" width="4" height="1" fill="#ce9178"/><rect x="942" y="162" width="7" height="1" fill="#ce9178"/><rect x="949" y="162" width="1" height="1" fill="#179fff"/><rect x="950" y="162" width="1" height="1" fill="#d4d4d4"/><rect x="919" y="164" width="6" height="1" fill="#c586c0"/><rect x="925" y="164" width="1" height="1" fill="#d4d4d4"/><rect x="915" y="166" width="1" height="1" fill="#da70d6"/><rect x="915" y="170" width="6" height="1" fill="#dcdcaa"/><rect x="921" y="170" width="1" height="1" fill="#da70d6"/><rect x="922" y="170" width="3" height="1" fill="#ce9178"/><rect x="926" y="170" width="6" height="1" fill="#9cdcfe"/><rect x="933" y="170" width="3" height="1" fill="#ce9178"/><rect x="937" y="170" width="2" height="1" fill="#ce9178"/><rect x="940" y="170" width="8" height="1" fill="#ce9178"/><rect x="948" y="170" width="1" height="1" fill="#d4d4d4"/><rect x="950" y="170" width="10" height="1" fill="#9cdcfe"/><rect x="961" y="170" width="1" height="1" fill="#d4d4d4"/><rect x="963" y="170" width="1" height="1" fill="#179fff"/><rect x="964" y="170" width="8" height="1" fill="#4ec9b0"/><rect x="972" y="170" width="1" height="1" fill="#179fff"/><rect x="973" y="170" width="1" height="1" fill="#179fff"/><rect x="974" y="170" width="4" height="1" fill="#b5cea8"/><rect x="979" y="170" width="1" height="1" fill="#d4d4d4"/><rect x="981" y="170" width="4" height="1" fill="#b5cea8"/><rect x="985" y="170" width="1" height="1" fill="#179fff"/><rect x="922" y="172" width="1" height="1" fill="#179fff"/><rect x="923" y="172" width="9" height="1" fill="#9cdcfe"/><rect x="932" y="172" width="1" height="1" fill="#d4d4d4"/><rect x="933" y="172" width="8" height="1" fill="#9cdcfe"/><rect x="942" y="172" width="1" height="1" fill="#d4d4d4"/><rect x="944" y="172" width="22" height="1" fill="#569cd6"/><rect x="966" y="172" width="1" height="1" fill="#179fff"/><rect x="968" y="172" width="1" height="1" fill="#d4d4d4"/><rect x="970" y="172" width="10" height="1" fill="#ce9178"/><rect x="981" y="172" width="1" height="1" fill="#d4d4d4"/><rect x="983" y="172" width="3" height="1" fill="#ce9178"/><rect x="915" y="176" width="6" height="1" fill="#dcdcaa"/><rect x="921" y="176" width="1" height="1" fill="#da70d6"/><rect x="922" y="176" width="8" height="1" fill="#ce9178"/><rect x="931" y="176" width="4" height="1" fill="#ce9178"/><rect x="936" y="176" width="4" height="1" fill="#ce9178"/><rect x="941" y="176" width="5" height="1" fill="#ce9178"/><rect x="947" y="176" width="2" height="1" fill="#ce9178"/><rect x="950" y="176" width="6" height="1" fill="#9cdcfe"/><rect x="957" y="176" width="1" height="1" fill="#ce9178"/><rect x="959" y="176" width="8" height="1" fill="#ce9178"/><rect x="967" y="176" width="1" height="1" fill="#d4d4d4"/><rect x="969" y="176" width="17" height="1" fill="#dcdcaa"/><rect x="915" y="180" width="3" height="1" fill="#c586c0"/><rect x="919" y="180" width="1" height="1" fill="#da70d6"/><rect x="920" y="180" width="3" height="1" fill="#569cd6"/><rect x="924" y="180" width="1" height="1" fill="#9cdcfe"/><rect x="926" y="180" width="1" height="1" fill="#d4d4d4"/><rect x="928" y="180" width="2" height="1" fill="#b5cea8"/><rect x="930" y="180" width="1" height="1" fill="#d4d4d4"/><rect x="932" y="180" width="1" height="1" fill="#9cdcfe"/><rect x="934" y="180" width="1" height="1" fill="#d4d4d4"/><rect x="935" y="180" width="1" height="1" fill="#d4d4d4"/><rect x="937" y="180" width="1" height="1" fill="#b5cea8"/><rect x="938" y="180" width="1" height="1" fill="#d4d4d4"/><rect x="940" y="180" width="1" height="1" fill="#9cdcfe"/><rect x="941" y="180" width="1" height="1" fill="#d4d4d4"/><rect x="942" y="180" width="1" height="1" fill="#d4d4d4"/><rect x="943" y="180" width="1" height="1" fill="#da70d6"/><rect x="945" y="180" width="1" height="1" fill="#da70d6"/><rect x="919" y="182" width="6" height="1" fill="#dcdcaa"/><rect x="925" y="182" width="1" height="1" fill="#179fff"/><rect x="926" y="182" width="11" height="1" fill="#ce9178"/><rect x="938" y="182" width="2" height="1" fill="#ce9178"/><rect x="941" y="182" width="2" height="1" fill="#ce9178"/><rect x="944" y="182" width="13" height="1" fill="#ce9178"/><rect x="957" y="182" width="1" height="1" fill="#d4d4d4"/><rect x="959" y="182" width="1" height="1" fill="#9cdcfe"/><rect x="960" y="182" width="1" height="1" fill="#179fff"/><rect x="961" y="182" width="1" height="1" fill="#d4d4d4"/><rect x="919" y="184" width="10" height="1" fill="#dcdcaa"/><rect x="929" y="184" width="1" height="1" fill="#179fff"/><rect x="930" y="184" width="4" height="1" fill="#b5cea8"/><rect x="935" y="184" width="1" height="1" fill="#d4d4d4"/><rect x="937" y="184" width="18" height="1" fill="#9cdcfe"/><rect x="955" y="184" width="1" height="1" fill="#179fff"/><rect x="956" y="184" width="1" height="1" fill="#d4d4d4"/><rect x="915" y="186" width="1" height="1" fill="#da70d6"/><rect x="915" y="188" width="6" height="1" fill="#dcdcaa"/><rect x="921" y="188" width="1" height="1" fill="#da70d6"/><rect x="922" y="188" width="11" height="1" fill="#ce9178"/><rect x="934" y="188" width="7" height="1" fill="#ce9178"/><rect x="941" y="188" width="1" height="1" fill="#da70d6"/><rect x="942" y="188" width="1" height="1" fill="#d4d4d4"/><rect x="915" y="190" width="6" height="1" fill="#dcdcaa"/><rect x="921" y="190" width="1" height="1" fill="#da70d6"/><rect x="922" y="190" width="6" height="1" fill="#9cdcfe"/><rect x="928" y="190" width="1" height="1" fill="#da70d6"/><rect x="929" y="190" width="1" height="1" fill="#d4d4d4"/><rect x="915" y="192" width="11" height="1" fill="#dcdcaa"/><rect x="926" y="192" width="1" height="1" fill="#da70d6"/><rect x="927" y="192" width="1" height="1" fill="#da70d6"/><rect x="928" y="192" width="1" height="1" fill="#d4d4d4"/><rect x="911" y="194" width="1" height="1" fill="#ffd700"/></g><g opacity="0.2"><rect x="911" y="91" width="2" height="1" fill="#6a9955"/><rect x="912" y="93" width="1" height="1" fill="#6a9955"/><rect x="914" y="93" width="23" height="1" fill="#6a9955"/><rect x="938" y="93" width="9" height="1" fill="#6a9955"/><rect x="948" y="93" width="9" height="1" fill="#6a9955"/><rect x="958" y="93" width="7" height="1" fill="#6a9955"/><rect x="966" y="93" width="10" height="1" fill="#6a9955"/><rect x="977" y="93" width="2" height="1" fill="#6a9955"/><rect x="980" y="93" width="3" height="1" fill="#6a9955"/><rect x="912" y="95" width="1" height="1" fill="#6a9955"/><rect x="912" y="97" width="1" height="1" fill="#6a9955"/><rect x="914" y="97" width="24" height="1" fill="#6a9955"/><rect x="939" y="97" width="7" height="1" fill="#6a9955"/><rect x="912" y="99" width="2" height="1" fill="#6a9955"/><rect x="911" y="103" width="8" height="1" fill="#c586c0"/><rect x="920" y="103" width="9" height="1" fill="#ce9178"/><rect x="911" y="105" width="8" height="1" fill="#c586c0"/><rect x="920" y="105" width="12" height="1" fill="#ce9178"/><rect x="911" y="107" width="8" height="1" fill="#c586c0"/><rect x="920" y="107" width="13" height="1" fill="#ce9178"/><rect x="911" y="109" width="8" height="1" fill="#c586c0"/><rect x="920" y="109" width="21" height="1" fill="#ce9178"/><rect x="911" y="111" width="8" height="1" fill="#c586c0"/><rect x="920" y="111" width="17" height="1" fill="#ce9178"/><rect x="911" y="113" width="8" height="1" fill="#c586c0"/><rect x="920" y="113" width="17" height="1" fill="#ce9178"/><rect x="911" y="115" width="8" height="1" fill="#c586c0"/><rect x="920" y="115" width="13" height="1" fill="#ce9178"/><rect x="911" y="117" width="8" height="1" fill="#c586c0"/><rect x="920" y="117" width="14" height="1" fill="#ce9178"/><rect x="911" y="121" width="4" height="1" fill="#569cd6"/><rect x="916" y="121" width="8" height="1" fill="#dcdcaa"/><rect x="924" y="121" width="1" height="1" fill="#ffd700"/><rect x="925" y="121" width="4" height="1" fill="#569cd6"/><rect x="929" y="121" width="1" height="1" fill="#ffd700"/><rect x="911" y="123" width="1" height="1" fill="#ffd700"/><rect x="915" y="125" width="6" height="1" fill="#dcdcaa"/><rect x="921" y="125" width="1" height="1" fill="#da70d6"/><rect x="922" y="125" width="6" height="1" fill="#ce9178"/><rect x="929" y="125" width="9" height="1" fill="#ce9178"/><rect x="938" y="125" width="1" height="1" fill="#da70d6"/><rect x="939" y="125" width="1" height="1" fill="#d4d4d4"/><rect x="915" y="129" width="2" height="1" fill="#6a9955"/><rect x="918" y="129" width="5" height="1" fill="#6a9955"/><rect x="924" y="129" width="4" height="1" fill="#6a9955"/><rect x="929" y="129" width="11" height="1" fill="#6a9955"/><rect x="941" y="129" width="2" height="1" fill="#6a9955"/><rect x="915" y="131" width="15" height="1" fill="#4ec9b0"/><rect x="931" y="131" width="9" height="1" fill="#9cdcfe"/><rect x="940" y="131" width="1" height="1" fill="#d4d4d4"/><rect x="915" y="133" width="8" height="1" fill="#4ec9b0"/><rect x="924" y="133" width="10" height="1" fill="#9cdcfe"/><rect x="934" y="133" width="1" height="1" fill="#d4d4d4"/><rect x="915" y="135" width="13" height="1" fill="#dcdcaa"/><rect x="928" y="135" width="1" height="1" fill="#da70d6"/><rect x="929" y="135" width="1" height="1" fill="#d4d4d4"/><rect x="930" y="135" width="9" height="1" fill="#9cdcfe"/><rect x="939" y="135" width="1" height="1" fill="#da70d6"/><rect x="940" y="135" width="1" height="1" fill="#d4d4d4"/><rect x="915" y="137" width="6" height="1" fill="#dcdcaa"/><rect x="921" y="137" width="1" height="1" fill="#da70d6"/><rect x="922" y="137" width="5" height="1" fill="#ce9178"/><rect x="928" y="137" width="2" height="1" fill="#ce9178"/><rect x="931" y="137" width="2" height="1" fill="#ce9178"/><rect x="934" y="137" width="4" height="1" fill="#ce9178"/><rect x="939" y="137" width="4" height="1" fill="#ce9178"/><rect x="944" y="137" width="2" height="1" fill="#ce9178"/><rect x="947" y="137" width="3" height="1" fill="#ce9178"/><rect x="951" y="137" width="8" height="1" fill="#ce9178"/><rect x="960" y="137" width="9" height="1" fill="#ce9178"/><rect x="970" y="137" width="1" height="1" fill="#ce9178"/><rect x="971" y="137" width="1" height="1" fill="#d4d4d4"/><rect x="922" y="139" width="17" height="1" fill="#569cd6"/><rect x="939" y="139" width="1" height="1" fill="#d4d4d4"/><rect x="922" y="141" width="9" height="1" fill="#9cdcfe"/><rect x="931" y="141" width="1" height="1" fill="#d4d4d4"/><rect x="932" y="141" width="5" height="1" fill="#9cdcfe"/><rect x="937" y="141" width="1" height="1" fill="#d4d4d4"/><rect x="922" y="143" width="1" height="1" fill="#179fff"/><rect x="923" y="143" width="9" height="1" fill="#9cdcfe"/><rect x="932" y="143" width="1" height="1" fill="#d4d4d4"/><rect x="933" y="143" width="8" height="1" fill="#9cdcfe"/><rect x="942" y="143" width="1" height="1" fill="#d4d4d4"/><rect x="944" y="143" width="21" height="1" fill="#569cd6"/><rect x="965" y="143" width="1" height="1" fill="#179fff"/><rect x="967" y="143" width="1" height="1" fill="#d4d4d4"/><rect x="969" y="143" width="7" height="1" fill="#ce9178"/><rect x="977" y="143" width="1" height="1" fill="#d4d4d4"/><rect x="979" y="143" width="2" height="1" fill="#ce9178"/><rect x="981" y="143" width="1" height="1" fill="#d4d4d4"/><rect x="922" y="145" width="1" height="1" fill="#179fff"/><rect x="923" y="145" width="9" height="1" fill="#9cdcfe"/><rect x="932" y="145" width="1" height="1" fill="#d4d4d4"/><rect x="933" y="145" width="8" height="1" fill="#9cdcfe"/><rect x="942" y="145" width="1" height="1" fill="#d4d4d4"/><rect x="944" y="145" width="15" height="1" fill="#569cd6"/><rect x="959" y="145" width="1" height="1" fill="#179fff"/><rect x="961" y="145" width="1" height="1" fill="#d4d4d4"/><rect x="963" y="145" width="4" height="1" fill="#ce9178"/><rect x="968" y="145" width="1" height="1" fill="#d4d4d4"/><rect x="970" y="145" width="2" height="1" fill="#ce9178"/><rect x="972" y="145" width="1" height="1" fill="#d4d4d4"/><rect x="922" y="147" width="1" height="1" fill="#179fff"/><rect x="923" y="147" width="9" height="1" fill="#9cdcfe"/><rect x="932" y="147" width="1" height="1" fill="#d4d4d4"/><rect x="933" y="147" width="8" height="1" fill="#9cdcfe"/><rect x="942" y="147" width="1" height="1" fill="#d4d4d4"/><rect x="944" y="147" width="16" height="1" fill="#569cd6"/><rect x="960" y="147" width="1" height="1" fill="#179fff"/><rect x="962" y="147" width="1" height="1" fill="#d4d4d4"/><rect x="964" y="147" width="5" height="1" fill="#ce9178"/><rect x="970" y="147" width="1" height="1" fill="#d4d4d4"/><rect x="972" y="147" width="2" height="1" fill="#ce9178"/><rect x="974" y="147" width="1" height="1" fill="#d4d4d4"/><rect x="922" y="149" width="1" height="1" fill="#179fff"/><rect x="923" y="149" width="9" height="1" fill="#9cdcfe"/><rect x="932" y="149" width="1" height="1" fill="#d4d4d4"/><rect x="933" y="149" width="8" height="1" fill="#9cdcfe"/><rect x="942" y="149" width="1" height="1" fill="#d4d4d4"/><rect x="944" y="149" width="23" height="1" fill="#569cd6"/><rect x="967" y="149" width="1" height="1" fill="#179fff"/><rect x="969" y="149" width="1" height="1" fill="#d4d4d4"/><rect x="971" y="149" width="2" height="1" fill="#ce9178"/><rect x="974" y="149" width="8" height="1" fill="#ce9178"/><rect x="983" y="149" width="3" height="1" fill="#ce9178"/><rect x="915" y="153" width="8" height="1" fill="#569cd6"/><rect x="924" y="153" width="9" height="1" fill="#9cdcfe"/><rect x="934" y="153" width="1" height="1" fill="#d4d4d4"/><rect x="936" y="153" width="9" height="1" fill="#9cdcfe"/><rect x="945" y="153" width="1" height="1" fill="#d4d4d4"/><rect x="946" y="153" width="8" height="1" fill="#9cdcfe"/><rect x="955" y="153" width="1" height="1" fill="#d4d4d4"/><rect x="957" y="153" width="3" height="1" fill="#b5cea8"/><rect x="960" y="153" width="1" height="1" fill="#d4d4d4"/><rect x="915" y="155" width="8" height="1" fill="#569cd6"/><rect x="924" y="155" width="9" height="1" fill="#9cdcfe"/><rect x="934" y="155" width="1" height="1" fill="#d4d4d4"/><rect x="936" y="155" width="9" height="1" fill="#9cdcfe"/><rect x="945" y="155" width="1" height="1" fill="#d4d4d4"/><rect x="946" y="155" width="8" height="1" fill="#9cdcfe"/><rect x="955" y="155" width="1" height="1" fill="#d4d4d4"/><rect x="957" y="155" width="3" height="1" fill="#b5cea8"/><rect x="960" y="155" width="1" height="1" fill="#d4d4d4"/><rect x="915" y="157" width="6" height="1" fill="#dcdcaa"/><rect x="921" y="157" width="1" height="1" fill="#da70d6"/><rect x="922" y="157" width="8" height="1" fill="#ce9178"/><rect x="931" y="157" width="8" height="1" fill="#ce9178"/><rect x="940" y="157" width="7" height="1" fill="#ce9178"/><rect x="948" y="157" width="1" height="1" fill="#ce9178"/><rect x="949" y="157" width="1" height="1" fill="#d4d4d4"/><rect x="951" y="157" width="9" height="1" fill="#9cdcfe"/><rect x="960" y="157" width="1" height="1" fill="#d4d4d4"/><rect x="962" y="157" width="9" height="1" fill="#9cdcfe"/><rect x="971" y="157" width="1" height="1" fill="#da70d6"/><rect x="972" y="157" width="1" height="1" fill="#d4d4d4"/><rect x="915" y="159" width="2" height="1" fill="#c586c0"/><rect x="917" y="159" width="1" height="1" fill="#da70d6"/><rect x="918" y="159" width="18" height="1" fill="#dcdcaa"/><rect x="936" y="159" width="1" height="1" fill="#179fff"/><rect x="937" y="159" width="4" height="1" fill="#569cd6"/><rect x="941" y="159" width="1" height="1" fill="#d4d4d4"/><rect x="943" y="159" width="1" height="1" fill="#d4d4d4"/><rect x="944" y="159" width="10" height="1" fill="#9cdcfe"/><rect x="954" y="159" width="1" height="1" fill="#179fff"/><rect x="956" y="159" width="1" height="1" fill="#d4d4d4"/><rect x="957" y="159" width="1" height="1" fill="#d4d4d4"/><rect x="959" y="159" width="6" height="1" fill="#569cd6"/><rect x="965" y="159" width="1" height="1" fill="#da70d6"/><rect x="967" y="159" width="1" height="1" fill="#da70d6"/><rect x="919" y="161" width="6" height="1" fill="#dcdcaa"/><rect x="925" y="161" width="1" height="1" fill="#179fff"/><rect x="926" y="161" width="4" height="1" fill="#ce9178"/><rect x="931" y="161" width="5" height="1" fill="#ce9178"/><rect x="937" y="161" width="4" height="1" fill="#ce9178"/><rect x="942" y="161" width="7" height="1" fill="#ce9178"/><rect x="949" y="161" width="1" height="1" fill="#179fff"/><rect x="950" y="161" width="1" height="1" fill="#d4d4d4"/><rect x="919" y="163" width="6" height="1" fill="#c586c0"/><rect x="925" y="163" width="1" height="1" fill="#d4d4d4"/><rect x="915" y="165" width="1" height="1" fill="#da70d6"/><rect x="915" y="169" width="6" height="1" fill="#dcdcaa"/><rect x="921" y="169" width="1" height="1" fill="#da70d6"/><rect x="922" y="169" width="3" height="1" fill="#ce9178"/><rect x="926" y="169" width="6" height="1" fill="#9cdcfe"/><rect x="933" y="169" width="3" height="1" fill="#ce9178"/><rect x="937" y="169" width="2" height="1" fill="#ce9178"/><rect x="940" y="169" width="8" height="1" fill="#ce9178"/><rect x="948" y="169" width="1" height="1" fill="#d4d4d4"/><rect x="950" y="169" width="10" height="1" fill="#9cdcfe"/><rect x="961" y="169" width="1" height="1" fill="#d4d4d4"/><rect x="963" y="169" width="1" height="1" fill="#179fff"/><rect x="964" y="169" width="8" height="1" fill="#4ec9b0"/><rect x="972" y="169" width="1" height="1" fill="#179fff"/><rect x="973" y="169" width="1" height="1" fill="#179fff"/><rect x="974" y="169" width="4" height="1" fill="#b5cea8"/><rect x="979" y="169" width="1" height="1" fill="#d4d4d4"/><rect x="981" y="169" width="4" height="1" fill="#b5cea8"/><rect x="985" y="169" width="1" height="1" fill="#179fff"/><rect x="922" y="171" width="1" height="1" fill="#179fff"/><rect x="923" y="171" width="9" height="1" fill="#9cdcfe"/><rect x="932" y="171" width="1" height="1" fill="#d4d4d4"/><rect x="933" y="171" width="8" height="1" fill="#9cdcfe"/><rect x="942" y="171" width="1" height="1" fill="#d4d4d4"/><rect x="944" y="171" width="22" height="1" fill="#569cd6"/><rect x="966" y="171" width="1" height="1" fill="#179fff"/><rect x="968" y="171" width="1" height="1" fill="#d4d4d4"/><rect x="970" y="171" width="10" height="1" fill="#ce9178"/><rect x="981" y="171" width="1" height="1" fill="#d4d4d4"/><rect x="983" y="171" width="3" height="1" fill="#ce9178"/><rect x="915" y="175" width="6" height="1" fill="#dcdcaa"/><rect x="921" y="175" width="1" height="1" fill="#da70d6"/><rect x="922" y="175" width="8" height="1" fill="#ce9178"/><rect x="931" y="175" width="4" height="1" fill="#ce9178"/><rect x="936" y="175" width="4" height="1" fill="#ce9178"/><rect x="941" y="175" width="5" height="1" fill="#ce9178"/><rect x="947" y="175" width="2" height="1" fill="#ce9178"/><rect x="950" y="175" width="6" height="1" fill="#9cdcfe"/><rect x="957" y="175" width="1" height="1" fill="#ce9178"/><rect x="959" y="175" width="8" height="1" fill="#ce9178"/><rect x="967" y="175" width="1" height="1" fill="#d4d4d4"/><rect x="969" y="175" width="17" height="1" fill="#dcdcaa"/><rect x="915" y="179" width="3" height="1" fill="#c586c0"/><rect x="919" y="179" width="1" height="1" fill="#da70d6"/><rect x="920" y="179" width="3" height="1" fill="#569cd6"/><rect x="924" y="179" width="1" height="1" fill="#9cdcfe"/><rect x="926" y="179" width="1" height="1" fill="#d4d4d4"/><rect x="928" y="179" width="2" height="1" fill="#b5cea8"/><rect x="930" y="179" width="1" height="1" fill="#d4d4d4"/><rect x="932" y="179" width="1" height="1" fill="#9cdcfe"/><rect x="934" y="179" width="1" height="1" fill="#d4d4d4"/><rect x="935" y="179" width="1" height="1" fill="#d4d4d4"/><rect x="937" y="179" width="1" height="1" fill="#b5cea8"/><rect x="938" y="179" width="1" height="1" fill="#d4d4d4"/><rect x="940" y="179" width="1" height="1" fill="#9cdcfe"/><rect x="941" y="179" width="1" height="1" fill="#d4d4d4"/><rect x="942" y="179" width="1" height="1" fill="#d4d4d4"/><rect x="943" y="179" width="1" height="1" fill="#da70d6"/><rect x="945" y="179" width="1" height="1" fill="#da70d6"/><rect x="919" y="181" width="6" height="1" fill="#dcdcaa"/><rect x="925" y="181" width="1" height="1" fill="#179fff"/><rect x="926" y="181" width="11" height="1" fill="#ce9178"/><rect x="938" y="181" width="2" height="1" fill="#ce9178"/><rect x="941" y="181" width="2" height="1" fill="#ce9178"/><rect x="944" y="181" width="13" height="1" fill="#ce9178"/><rect x="957" y="181" width="1" height="1" fill="#d4d4d4"/><rect x="959" y="181" width="1" height="1" fill="#9cdcfe"/><rect x="960" y="181" width="1" height="1" fill="#179fff"/><rect x="961" y="181" width="1" height="1" fill="#d4d4d4"/><rect x="919" y="183" width="10" height="1" fill="#dcdcaa"/><rect x="929" y="183" width="1" height="1" fill="#179fff"/><rect x="930" y="183" width="4" height="1" fill="#b5cea8"/><rect x="935" y="183" width="1" height="1" fill="#d4d4d4"/><rect x="937" y="183" width="18" height="1" fill="#9cdcfe"/><rect x="955" y="183" width="1" height="1" fill="#179fff"/><rect x="956" y="183" width="1" height="1" fill="#d4d4d4"/><rect x="915" y="185" width="1" height="1" fill="#da70d6"/><rect x="915" y="187" width="6" height="1" fill="#dcdcaa"/><rect x="921" y="187" width="1" height="1" fill="#da70d6"/><rect x="922" y="187" width="11" height="1" fill="#ce9178"/><rect x="934" y="187" width="7" height="1" fill="#ce9178"/><rect x="941" y="187" width="1" height="1" fill="#da70d6"/><rect x="942" y="187" width="1" height="1" fill="#d4d4d4"/><rect x="915" y="189" width="6" height="1" fill="#dcdcaa"/><rect x="921" y="189" width="1" height="1" fill="#da70d6"/><rect x="922" y="189" width="6" height="1" fill="#9cdcfe"/><rect x="928" y="189" width="1" height="1" fill="#da70d6"/><rect x="929" y="189" width="1" height="1" fill="#d4d4d4"/><rect x="915" y="191" width="11" height="1" fill="#dcdcaa"/><rect x="926" y="191" width="1" height="1" fill="#da70d6"/><rect x="927" y="191" width="1" height="1" fill="#da70d6"/><rect x="928" y="191" width="1" height="1" fill="#d4d4d4"/><rect x="911" y="193" width="1" height="1" fill="#ffd700"/></g></svg>
<div class="abs" style="left:986px;top:91px;width:1px;height:329px;background:#2b2b2b;"></div>
<div class="abs" style="left:986px;top:91px;width:12px;height:1px;background:#2b2b2b;"></div>
<div class="abs" style="left:987px;top:176px;width:11px;height:2px;background:#a0a0a0;"></div>
<div id="panel" class="abs"></div>
<span class="t" style="left:275.50px;top:434.44px;font-size:11px;transform:scaleX(0.8654);transform-origin:0 0;color:#9d9d9d;">PROBLEMS</span>
<span class="t" style="left:352.70px;top:434.44px;font-size:11px;transform:scaleX(0.9045);transform-origin:0 0;color:#9d9d9d;">OUTPUT</span>
<span class="t" style="left:418.30px;top:434.44px;font-size:11px;transform:scaleX(0.8826);transform-origin:0 0;color:#9d9d9d;">DEBUG CONSOLE</span>
<span class="t" style="left:527.40px;top:434.44px;font-size:11px;transform:scaleX(0.9223);transform-origin:0 0;color:#e7e7e7;">TERMINAL</span>
<span class="t" style="left:603.20px;top:434.44px;font-size:11px;transform:scaleX(0.8250);transform-origin:0 0;color:#9d9d9d;">PORTS</span>
<span class="t" style="left:658.60px;top:434.44px;font-size:11px;transform:scaleX(0.8826);transform-origin:0 0;color:#9d9d9d;">ESP-IDF</span>
<svg style="left:878px;top:431.6px;" width="14" height="14" viewBox="0 0 14 14"><path d="M7 0.6 V13.4 M0.6 7 H13.4" stroke="#cccccc" stroke-width="1.15" fill="none" stroke-linecap="round"/></svg>
<svg style="left:898.2px;top:436px;" width="8" height="5" viewBox="0 0 8 5"><path d="M0.5 0.5 L3.9 3.9 L7.3 0.5" fill="none" stroke="#cccccc" stroke-width="1.05" stroke-linecap="round" stroke-linejoin="round"/></svg>
<svg style="left:919px;top:436.4px;" width="14" height="4" viewBox="0 0 14 4"><circle cx="1.2" cy="2" r="1.05" fill="#cccccc"/><circle cx="6.5" cy="2" r="1.05" fill="#cccccc"/><circle cx="11.799999999999999" cy="2" r="1.05" fill="#cccccc"/></svg>
<svg style="left:945.6px;top:435px;" width="11" height="7" viewBox="0 0 11 7"><path d="M0.7 5.5 L5.3 1 L9.9 5.5" fill="none" stroke="#cccccc" stroke-width="1.15" stroke-linecap="round" stroke-linejoin="round"/></svg>
<svg style="left:972.2px;top:433.6px;" width="10" height="10" viewBox="0 0 10 10"><path d="M0.6 0.6 L9 9 M9 0.6 L0.6 9" stroke="#cccccc" stroke-width="1.15" fill="none" stroke-linecap="round"/></svg>
<div class="abs" style="left:255px;top:451px;width:620px;height:221px;overflow:hidden"><div class="abs" style="left:-255px;top:-451px;width:998px;height:697px">
<span class="t mono" style="left:275px;top:457.76px;font-size:13.5px;letter-spacing:-0.402px;color:#11b97a">I (276) sleep: Configure to isolate all GPIO pins in sleep state</span>
<span class="t mono" style="left:275px;top:474.76px;font-size:13.5px;letter-spacing:-0.402px;color:#11b97a">I (282) sleep: Enable automatic switching of GPIO sleep configuration</span>
<span class="t mono" style="left:275px;top:491.76px;font-size:13.5px;letter-spacing:-0.402px;color:#11b97a">I (290) main_task: Started on CPU0</span>
<span class="t mono" style="left:275px;top:508.76px;font-size:13.5px;letter-spacing:-0.402px;color:#11b97a">I (300) main_task: Calling app_main()</span>
<span class="t mono" style="left:275px;top:525.76px;font-size:13.5px;letter-spacing:-0.402px;color:#cccccc">Hello world!</span>
<span class="t mono" style="left:275px;top:542.76px;font-size:13.5px;letter-spacing:-0.402px;color:#cccccc">This is esp32s3 chip with 2 CPU core(s), WiFi/BLE, silicon revision v0.2, 2M</span>
<span class="t mono" style="left:275px;top:559.76px;font-size:13.5px;letter-spacing:-0.402px;color:#cccccc">B external flash</span>
<span class="t mono" style="left:275px;top:576.76px;font-size:13.5px;letter-spacing:-0.402px;color:#cccccc">Minimum free heap size: 389836 bytes</span>
<span class="t mono" style="left:275px;top:593.76px;font-size:13.5px;letter-spacing:-0.402px;color:#cccccc">Restarting in 10 seconds...</span>
<span class="t mono" style="left:275px;top:610.76px;font-size:13.5px;letter-spacing:-0.402px;color:#cccccc">Restarting in 9 seconds...</span>
<span class="t mono" style="left:275px;top:627.76px;font-size:13.5px;letter-spacing:-0.402px;color:#cccccc">Restarting in 8 seconds...</span>
<span class="t mono" style="left:275px;top:644.76px;font-size:13.5px;letter-spacing:-0.402px;color:#cccccc">Restarting in 7 seconds...</span>
<span class="t mono" style="left:275px;top:661.76px;font-size:13.5px;letter-spacing:-0.402px;color:#cccccc">Restarting in 6 seconds...</span>
</div></div>
<div class="abs" style="left:869px;top:551px;width:11px;height:19px;background:#2f2f2f;"></div>
<div class="abs" style="left:880px;top:455px;width:1px;height:221px;background:#2b2b2b;"></div>
<div class="abs" style="left:869px;top:455px;width:11px;height:1px;background:#050505;"></div>
<div class="abs" style="left:881px;top:499px;width:117px;height:22px;background:#37373d;"></div>
<div class="abs" style="left:881px;top:499px;width:1px;height:22px;background:#0078d4;"></div>
<svg style="left:892px;top:458.7px;" width="14" height="14" viewBox="0 0 13 13"><rect x="0.6" y="0.6" width="11.8" height="11.6" rx="1" fill="none" stroke="#cccccc" stroke-width="1.1"/><path d="M2.8 3.6 L5.4 6.2 L2.8 8.8 M6.4 9.2 H9.6" fill="none" stroke="#cccccc" stroke-width="1.05" stroke-linecap="round" stroke-linejoin="round"/></svg>
<span class="t" style="left:910.30px;top:460.67px;font-size:12.5px;transform:scaleX(0.9082);transform-origin:0 0;">ESP-IDF ...</span>
<svg style="left:975.4px;top:460.4px;" width="14" height="12" viewBox="0 0 14 12"><path d="M0.7 6.8 L4.4 10.6 L12.8 0.8" fill="none" stroke="#9d9d9d" stroke-width="1.1" stroke-linecap="round" stroke-linejoin="round"/></svg>
<svg style="left:892px;top:480.7px;" width="14" height="14" viewBox="0 0 13 13"><rect x="0.6" y="0.6" width="11.8" height="11.6" rx="1" fill="none" stroke="#cccccc" stroke-width="1.1"/><path d="M2.8 3.6 L5.4 6.2 L2.8 8.8 M6.4 9.2 H9.6" fill="none" stroke="#cccccc" stroke-width="1.05" stroke-linecap="round" stroke-linejoin="round"/></svg>
<span class="t" style="left:910.30px;top:482.67px;font-size:12.5px;transform:scaleX(0.9082);transform-origin:0 0;">ESP-IDF ...</span>
<svg style="left:975.4px;top:482.4px;" width="14" height="12" viewBox="0 0 14 12"><path d="M0.7 6.8 L4.4 10.6 L12.8 0.8" fill="none" stroke="#9d9d9d" stroke-width="1.1" stroke-linecap="round" stroke-linejoin="round"/></svg>
<svg style="left:892px;top:502.7px;" width="14" height="14" viewBox="0 0 13 13"><rect x="0.6" y="0.6" width="11.8" height="11.6" rx="1" fill="none" stroke="#cccccc" stroke-width="1.1"/><path d="M2.8 3.6 L5.4 6.2 L2.8 8.8 M6.4 9.2 H9.6" fill="none" stroke="#cccccc" stroke-width="1.05" stroke-linecap="round" stroke-linejoin="round"/></svg>
<span class="t" style="left:910.30px;top:504.67px;font-size:12.5px;transform:scaleX(0.9607);transform-origin:0 0;">ESP-IDF Mo...</span>
<div id="redbox" class="abs" style="left:251px;top:448px;width:618px;height:227px;border:3px solid #fa3939"></div>
<div id="status" class="abs"></div>
<div class="abs" style="left:0px;top:677px;width:33px;height:20px;background:#0078d4;"></div>
<svg style="left:11.6px;top:682px;" width="10" height="11" viewBox="0 0 10 11"><path d="M0.6 3.4 L3.8 6.6 L0.6 9.8 M8.6 0.8 L5.4 4 L8.6 7.2" fill="none" stroke="#ffffff" stroke-width="1.15" stroke-linecap="round" stroke-linejoin="round"/></svg>
<svg style="left:41px;top:682px;" width="13.4" height="11" viewBox="0 0 13.4 11"><path d="M1.6 1 L3.6 2.6 H9.6 L11.6 1 L12 4 Q13 5.4 12.6 7.6 Q12 10.2 6.7 10.2 Q1.2 10.2 0.7 7.6 Q0.3 5.4 1.3 4 Z" fill="#cccccc"/><rect x="2.6" y="5" width="8.2" height="3.6" rx="1.7" fill="#181818"/><circle cx="4.6" cy="6.8" r="0.9" fill="#cccccc"/><circle cx="8.8" cy="6.8" r="0.9" fill="#cccccc"/></svg>
<span class="t" style="left:58.40px;top:682.49px;font-size:12px;transform:scaleX(0.8925);transform-origin:0 0;">ESP-IDF v5.3.1</span>
<svg style="left:153px;top:681px;" width="7" height="12.4" viewBox="0 0 7 12.4"><g fill="none" stroke="#cccccc" stroke-width="1.05" stroke-linecap="round" stroke-linejoin="round"><path d="M1.8 0.6 V3.4 M5.2 0.6 V3.4 M0.6 3.4 H6.4 V6.4 Q6.4 8.4 3.5 8.6 Q0.6 8.4 0.6 6.4 Z M3.5 8.8 V11.8"/></g></svg>
<span class="t" style="left:167.40px;top:682.49px;font-size:12px;transform:scaleX(0.9336);transform-origin:0 0;">COM12</span>
<svg style="left:223.4px;top:681.6px;" width="12" height="12" viewBox="0 0 12 12"><g fill="none" stroke="#cccccc" stroke-width="1.05" stroke-linecap="round" stroke-linejoin="round"><rect x="2.4" y="2.4" width="7.2" height="7.2" rx="1" stroke-width="1.5"/><path d="M4.2 0.6 V2 M6 0.6 V2 M7.8 0.6 V2 M4.2 10 V11.4 M6 10 V11.4 M7.8 10 V11.4 M0.6 4.2 H2 M0.6 6 H2 M0.6 7.8 H2 M10 4.2 H11.4 M10 6 H11.4 M10 7.8 H11.4"/></g></svg>
<span class="t" style="left:240.50px;top:682.49px;font-size:12px;transform:scaleX(0.9147);transform-origin:0 0;">esp32s3</span>
<svg style="left:299.6px;top:682.4px;" width="13" height="10.4" viewBox="0 0 13 10.4"><g fill="none" stroke="#cccccc" stroke-width="1.05" stroke-linecap="round" stroke-linejoin="round"><path d="M0.6 9.6 V0.6 H4.6 L5.8 2 H12.2 V9.6 Z M0.6 3.8 H4.8 L6 2.6 M2.8 5.6 H12.2 M2.8 5.6 V9.6" stroke-width="1.1"/></g></svg>
<svg style="left:330px;top:681.4px;" width="12.4" height="12.4" viewBox="0 0 16 16"><path d="M6.58 2.48 L6.72 0.81 L9.28 0.81 L9.42 2.48 L10.90 3.09 L12.18 2.01 L13.99 3.82 L12.91 5.10 L13.52 6.58 L15.19 6.72 L15.19 9.28 L13.52 9.42 L12.91 10.90 L13.99 12.18 L12.18 13.99 L10.90 12.91 L9.42 13.52 L9.28 15.19 L6.72 15.19 L6.58 13.52 L5.10 12.91 L3.82 13.99 L2.01 12.18 L3.09 10.90 L2.48 9.42 L0.81 9.28 L0.81 6.72 L2.48 6.58 L3.09 5.10 L2.01 3.82 L3.82 2.01 L5.10 3.09 Z" fill="none" stroke="#cccccc" stroke-width="1.35" stroke-linejoin="round"/><circle cx="8" cy="8" r="1.9" fill="none" stroke="#cccccc" stroke-width="1.35"/></svg>
<svg style="left:360px;top:681.6px;" width="11" height="12" viewBox="0 0 11 12"><g fill="none" stroke="#cccccc" stroke-width="1.05" stroke-linecap="round" stroke-linejoin="round"><path d="M0.6 2.6 H10.4 M3.8 2.4 V0.8 H7.2 V2.4 M1.8 2.8 L2.4 11 H8.6 L9.2 2.8 M4.2 4.6 V9.4 M6.8 4.6 V9.4 M5.5 4.6 V9.4" stroke-width="1"/></g></svg>
<svg style="left:389.6px;top:681.6px;" width="13" height="12" viewBox="0 0.4 13 12.4"><path d="M1 11.2 L6.4 5.8 A3.4 3.4 0 0 1 10.8 1.2 L8.6 3.4 L9.8 4.6 L12 2.4 A3.4 3.4 0 0 1 7.4 6.8 L2 12.2 Z" fill="none" stroke="#cccccc" stroke-width="1.05" stroke-linejoin="round"/></svg>
<svg style="left:419.2px;top:680.6px;" width="13" height="13" viewBox="0 0 13 13"><path d="M6.50 1.70 L7.97 5.18 L11.73 5.50 L8.88 7.97 L9.73 11.65 L6.50 9.70 L3.27 11.65 L4.12 7.97 L1.27 5.50 L5.03 5.18 Z" fill="none" stroke="#cccccc" stroke-width="1.35" stroke-linejoin="miter"/></svg>
<span class="t" style="left:436.60px;top:682.49px;font-size:12px;transform:scaleX(0.8505);transform-origin:0 0;">UART</span>
<svg style="left:484px;top:681.4px;" width="9" height="12" viewBox="0 0 9 12"><g fill="none" stroke="#cccccc" stroke-width="1.05" stroke-linecap="round" stroke-linejoin="round"><path d="M5.6 0.6 L1 6.6 H4 L3 11.2 L7.8 4.8 H4.6 Z" stroke-width="1"/></g></svg>
<svg style="left:511px;top:682px;" width="14" height="11" viewBox="0 0 14 11"><g fill="none" stroke="#cccccc" stroke-width="1.05" stroke-linecap="round" stroke-linejoin="round"><rect x="0.6" y="0.6" width="12.6" height="8" rx="0.6"/><path d="M3.6 10.2 H10.2" stroke-width="1.4"/></g></svg>
<svg style="left:540.4px;top:681px;" width="15" height="13" viewBox="0 0 15 13"><g fill="none" stroke="#cccccc" stroke-width="1.05" stroke-linecap="round" stroke-linejoin="round"><path d="M3.8 5.2 V0.8 L13.8 6.6 L8 10"/><ellipse cx="3.8" cy="9.6" rx="1.9" ry="2.6"/><path d="M1.8 8.4 H5.8 M0.4 9.8 H1.8 M5.8 9.8 H7.2 M0.6 7 L1.9 8 M7 7 L5.7 8 M0.6 12.4 L1.9 11.4 M7 12.4 L5.7 11.4"/></g></svg>
<svg style="left:572.4px;top:681px;" width="10.6" height="12.4" viewBox="0 0 10.6 12.4"><g fill="none" stroke="#cccccc" stroke-width="1.05" stroke-linecap="round" stroke-linejoin="round"><path d="M5 0.6 C6 3 9.8 5 9.8 8.2 C9.8 10.6 7.8 11.8 5.3 11.8 C2.8 11.8 0.8 10.6 0.8 8.2 C0.8 6.4 2 5.4 2.6 4.2 C3.2 5.2 3.6 5.6 4 5.8 C4.6 4.4 4.4 2.4 5 0.6 Z M5.3 11.6 C3.6 10.6 3.8 8.8 5.3 7.6 C6.8 8.8 7 10.6 5.3 11.6"/></g></svg>
<svg style="left:601.2px;top:681.4px;" width="13" height="12" viewBox="0 0 13 12"><g fill="none" stroke="#cccccc" stroke-width="1.05" stroke-linecap="round" stroke-linejoin="round"><rect x="0.6" y="0.6" width="11.8" height="10.8" rx="0.8"/><path d="M2.8 3.4 L5.2 5.8 L2.8 8.2 M6.2 8.6 H9.4"/></g></svg>
<svg style="left:631.4px;top:681.4px;" width="13.4" height="12" viewBox="0 0 13.4 12"><g fill="none" stroke="#cccccc" stroke-width="1.05" stroke-linecap="round" stroke-linejoin="round"><rect x="0.6" y="0.6" width="12.2" height="10.8" rx="0.8"/></g><path d="M3 5 H6.6 V2.8 L10.4 6 L6.6 9.2 V7 H3 Z" fill="#cccccc"/></svg>
<svg style="left:661.4px;top:681px;" width="13" height="13" viewBox="0 0 13 13"><g fill="none" stroke="#cccccc" stroke-width="1.05" stroke-linecap="round" stroke-linejoin="round"><circle cx="6.4" cy="6.4" r="5.8"/><path d="M4 4 L8.8 8.8 M8.8 4 L4 8.8"/></g></svg>
<span class="t" style="left:678.40px;top:682.49px;font-size:12px;">0</span>
<svg style="left:689px;top:681.2px;" width="12.6" height="12" viewBox="0 0 12.6 12"><g fill="none" stroke="#cccccc" stroke-width="1.05" stroke-linecap="round" stroke-linejoin="round"><path d="M6.2 0.8 L11.8 11 H0.6 Z M6.2 4.4 V7.8"/></g><circle cx="6.2" cy="9.4" r="0.6" fill="#ccc"/></svg>
<span class="t" style="left:705.40px;top:682.49px;font-size:12px;">0</span>
<svg style="left:729px;top:681px;" width="12.4" height="12.4" viewBox="0 0 12.4 12.4"><g fill="none" stroke="#cccccc" stroke-width="1.05" stroke-linecap="round" stroke-linejoin="round"><path d="M3 0.8 Q0.2 4 3 7.4 M9.2 0.8 Q12 4 9.2 7.4 M4.6 2.2 Q3.2 4 4.6 6 M7.6 2.2 Q9 4 7.6 6 M6.1 4.6 L2.6 11.8 M6.1 4.6 L9.6 11.8 M4 9 H8.2 M3.4 10.6 L8.4 8.4"/></g><circle cx="6.1" cy="4.2" r="0.9" fill="#ccc"/></svg>
<span class="t" style="left:744.80px;top:682.49px;font-size:12px;">0</span>
<svg style="left:768px;top:681.4px;" width="12.6" height="12.6" viewBox="0 0 16 16"><path d="M6.58 2.48 L6.72 0.81 L9.28 0.81 L9.42 2.48 L10.90 3.09 L12.18 2.01 L13.99 3.82 L12.91 5.10 L13.52 6.58 L15.19 6.72 L15.19 9.28 L13.52 9.42 L12.91 10.90 L13.99 12.18 L12.18 13.99 L10.90 12.91 L9.42 13.52 L9.28 15.19 L6.72 15.19 L6.58 13.52 L5.10 12.91 L3.82 13.99 L2.01 12.18 L3.09 10.90 L2.48 9.42 L0.81 9.28 L0.81 6.72 L2.48 6.58 L3.09 5.10 L2.01 3.82 L3.82 2.01 L5.10 3.09 Z" fill="none" stroke="#cccccc" stroke-width="1.35" stroke-linejoin="round"/><circle cx="8" cy="8" r="1.9" fill="none" stroke="#cccccc" stroke-width="1.35"/></svg>
<span class="t" style="left:785.10px;top:682.49px;font-size:12px;transform:scaleX(0.9369);transform-origin:0 0;">Build</span>
<svg style="left:828px;top:681.4px;" width="12.4" height="12.4" viewBox="0 0 12.4 12.4"><g fill="none" stroke="#cccccc" stroke-width="1.05" stroke-linecap="round" stroke-linejoin="round"><ellipse cx="6.2" cy="6.8" rx="3.2" ry="4.4"/><path d="M3.2 5 H9.2 M0.6 6.8 H3 M9.4 6.8 H11.8 M1.2 2.4 L3.4 4.4 M11.2 2.4 L9 4.4 M1.2 11.4 L3.4 9.4 M11.2 11.4 L9 9.4 M4.4 2.6 Q6.2 0.6 8 2.6"/></g></svg>
<svg style="left:859.4px;top:681.4px;" width="10" height="12" viewBox="0 0 10 12"><g fill="none" stroke="#cccccc" stroke-width="1.05" stroke-linecap="round" stroke-linejoin="round"><path d="M0.8 0.8 L9 5.9 L0.8 11 Z"/></g></svg>
<span class="t" style="left:914.00px;top:681.14px;font-size:11px;letter-spacing:3.6px;">{}</span>
<span class="t" style="left:931.80px;top:682.49px;font-size:12px;">C</span>
<span class="t" style="left:953.60px;top:682.49px;font-size:12px;transform:scaleX(0.8745);transform-origin:0 0;">ESP-IDF</span>
</body>
</html>
